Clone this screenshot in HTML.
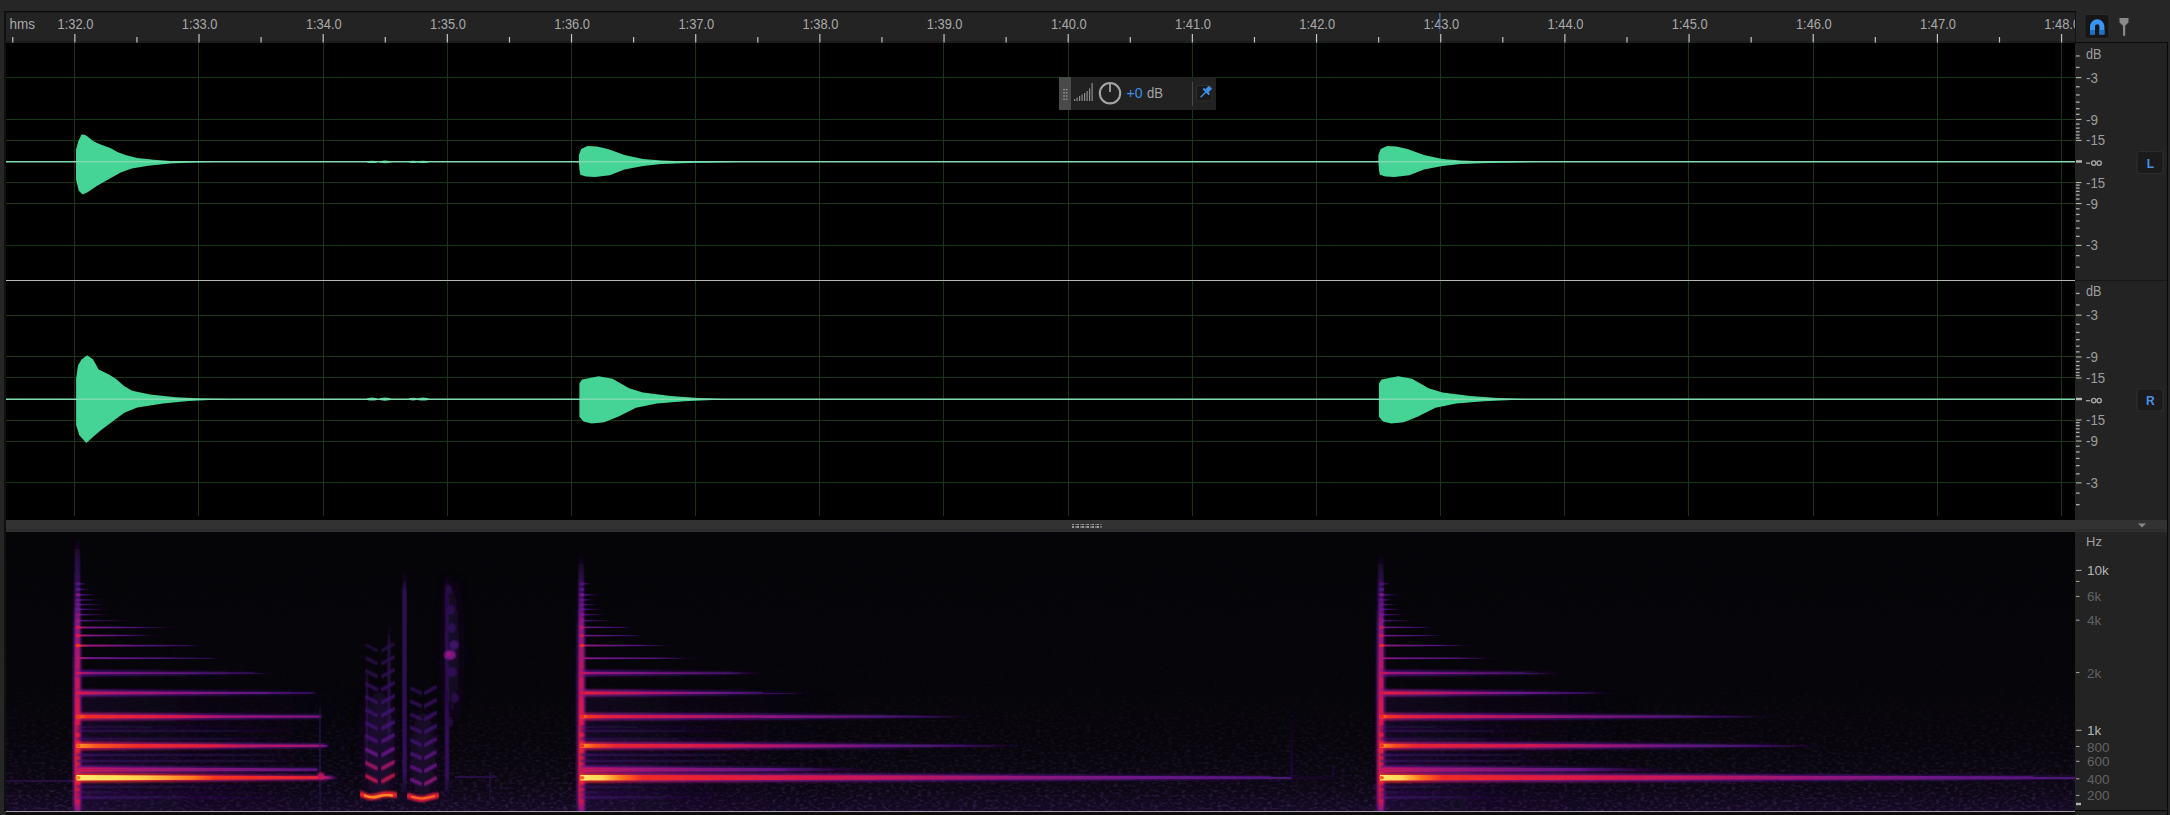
<!DOCTYPE html><html><head><meta charset="utf-8"><style>
html,body{margin:0;padding:0;background:#262626;width:2170px;height:815px;overflow:hidden}
svg{position:absolute;left:0;top:0;display:block}
text{font-family:"Liberation Sans",sans-serif}
</style></head><body>
<svg width="2170" height="815" viewBox="0 0 2170 815" shape-rendering="crispEdges">
<defs>
<filter id="blur1" x="-5%" y="-50%" width="110%" height="200%"><feGaussianBlur stdDeviation="0.8"/></filter>
<filter id="blur2" x="-5%" y="-50%" width="110%" height="200%"><feGaussianBlur stdDeviation="1.5"/></filter>
<filter id="blur3" x="-20%" y="-20%" width="140%" height="140%"><feGaussianBlur stdDeviation="2.5"/></filter>
<linearGradient id="sbg" x1="0" y1="0" x2="0" y2="1"><stop offset="0" stop-color="#050407"/><stop offset="0.55" stop-color="#060509"/><stop offset="0.8" stop-color="#08060c"/><stop offset="0.92" stop-color="#0c0714"/><stop offset="1" stop-color="#140a24"/></linearGradient>
<filter id="sb1" x="-2%" y="-200%" width="104%" height="500%"><feGaussianBlur stdDeviation="0.6"/></filter>
<filter id="sb2" x="-5%" y="-200%" width="110%" height="500%"><feGaussianBlur stdDeviation="1.2"/></filter>
<filter id="sb3" x="-50%" y="-50%" width="200%" height="200%"><feGaussianBlur stdDeviation="3"/></filter>
<filter id="noise" x="0" y="0" width="100%" height="100%"><feTurbulence type="fractalNoise" baseFrequency="0.22 0.4" numOctaves="2" seed="3"/><feColorMatrix type="matrix" values="0 0 0 0 0.16  0 0 0 0 0.06  0 0 0 0 0.3  0 0 0 1.8 -0.85"/></filter>
<linearGradient id="nmask" x1="0" y1="0" x2="0" y2="1"><stop offset="0" stop-color="#fff" stop-opacity="0.05"/><stop offset="0.6" stop-color="#fff" stop-opacity="0.15"/><stop offset="0.86" stop-color="#fff" stop-opacity="0.6"/><stop offset="1" stop-color="#fff" stop-opacity="1"/></linearGradient>
<mask id="nm"><rect x="6" y="532" width="2069" height="279" fill="url(#nmask)"/></mask>
<linearGradient id="hazeh" x1="0" y1="0" x2="1" y2="0"><stop offset="0" stop-color="#2a0f4a" stop-opacity="0.9"/><stop offset="0.3" stop-color="#1e0c38" stop-opacity="0.6"/><stop offset="1" stop-color="#140a24" stop-opacity="0"/></linearGradient>
<linearGradient id="g1" gradientUnits="userSpaceOnUse" x1="6" y1="0" x2="76" y2="0"><stop offset="0.0000" stop-color="#290d46" stop-opacity="1.00"/><stop offset="0.9143" stop-color="#2d0e4e" stop-opacity="1.00"/><stop offset="1.0000" stop-color="#3e126e" stop-opacity="1.00"/></linearGradient>
<linearGradient id="g2" gradientUnits="userSpaceOnUse" x1="0" y1="537" x2="0" y2="811"><stop offset="0.0000" stop-color="#1d0a30" stop-opacity="0.00"/><stop offset="0.0730" stop-color="#1d0a30" stop-opacity="0.00"/><stop offset="0.1934" stop-color="#1d0a30" stop-opacity="0.35"/><stop offset="0.3394" stop-color="#35105e" stop-opacity="0.70"/><stop offset="0.5219" stop-color="#58137e" stop-opacity="0.70"/><stop offset="0.6679" stop-color="#6b148a" stop-opacity="0.70"/><stop offset="0.8139" stop-color="#851480" stop-opacity="0.70"/><stop offset="0.9599" stop-color="#73148a" stop-opacity="0.70"/><stop offset="1.0000" stop-color="#3e126e" stop-opacity="0.70"/></linearGradient>
<linearGradient id="g3" gradientUnits="userSpaceOnUse" x1="0" y1="537" x2="0" y2="811"><stop offset="0.0000" stop-color="#1d0a30" stop-opacity="0.00"/><stop offset="0.0730" stop-color="#240c3e" stop-opacity="1.00"/><stop offset="0.1934" stop-color="#3a1166" stop-opacity="1.00"/><stop offset="0.3394" stop-color="#73148a" stop-opacity="1.00"/><stop offset="0.5219" stop-color="#aa146e" stop-opacity="1.00"/><stop offset="0.6679" stop-color="#c4155a" stop-opacity="1.00"/><stop offset="0.8139" stop-color="#de1646" stop-opacity="1.00"/><stop offset="0.9599" stop-color="#cd1553" stop-opacity="1.00"/><stop offset="1.0000" stop-color="#851480" stop-opacity="1.00"/></linearGradient>
<linearGradient id="g4" gradientUnits="userSpaceOnUse" x1="0" y1="585" x2="0" y2="811"><stop offset="0.0000" stop-color="#1d0a30" stop-opacity="0.00"/><stop offset="0.1549" stop-color="#851480" stop-opacity="1.00"/><stop offset="0.4204" stop-color="#c4155a" stop-opacity="1.00"/><stop offset="0.5973" stop-color="#de1646" stop-opacity="1.00"/><stop offset="0.8186" stop-color="#ec272e" stop-opacity="1.00"/><stop offset="0.9513" stop-color="#d5164d" stop-opacity="1.00"/><stop offset="1.0000" stop-color="#851480" stop-opacity="1.00"/></linearGradient>
<linearGradient id="g5" gradientUnits="userSpaceOnUse" x1="76.5" y1="0" x2="319.5" y2="0"><stop offset="0.0000" stop-color="#6b148a" stop-opacity="0.85"/><stop offset="0.2469" stop-color="#51137a" stop-opacity="0.85"/><stop offset="0.9877" stop-color="#270c43" stop-opacity="0.85"/><stop offset="1.0000" stop-color="#1d0a30" stop-opacity="0.00"/></linearGradient>
<linearGradient id="g6" gradientUnits="userSpaceOnUse" x1="76.5" y1="0" x2="319.5" y2="0"><stop offset="0.0000" stop-color="#c4155a" stop-opacity="1.00"/><stop offset="0.2469" stop-color="#a11473" stop-opacity="1.00"/><stop offset="0.9877" stop-color="#5b1380" stop-opacity="1.00"/><stop offset="1.0000" stop-color="#1d0a30" stop-opacity="0.00"/></linearGradient>
<linearGradient id="g7" gradientUnits="userSpaceOnUse" x1="76.5" y1="0" x2="319.5" y2="0"><stop offset="0.0000" stop-color="#4b1376" stop-opacity="1.00"/><stop offset="0.0988" stop-color="#35105e" stop-opacity="1.00"/><stop offset="0.7901" stop-color="#250c3f" stop-opacity="1.00"/><stop offset="1.0000" stop-color="#1d0a30" stop-opacity="0.00"/></linearGradient>
<linearGradient id="g8" gradientUnits="userSpaceOnUse" x1="76.5" y1="0" x2="319.5" y2="0"><stop offset="0.0000" stop-color="#4b1376" stop-opacity="1.00"/><stop offset="0.0988" stop-color="#35105e" stop-opacity="1.00"/><stop offset="0.7901" stop-color="#250c3f" stop-opacity="1.00"/><stop offset="1.0000" stop-color="#1d0a30" stop-opacity="0.00"/></linearGradient>
<linearGradient id="g9" gradientUnits="userSpaceOnUse" x1="76.5" y1="0" x2="319.5" y2="0"><stop offset="0.0000" stop-color="#481274" stop-opacity="1.00"/><stop offset="0.0494" stop-color="#330f5a" stop-opacity="1.00"/><stop offset="0.6584" stop-color="#230b3c" stop-opacity="1.00"/><stop offset="1.0000" stop-color="#1d0a30" stop-opacity="0.00"/></linearGradient>
<linearGradient id="g10" gradientUnits="userSpaceOnUse" x1="76.5" y1="0" x2="319.5" y2="0"><stop offset="0.0000" stop-color="#481274" stop-opacity="1.00"/><stop offset="0.0494" stop-color="#330f5a" stop-opacity="1.00"/><stop offset="0.7243" stop-color="#230b3c" stop-opacity="1.00"/><stop offset="1.0000" stop-color="#1d0a30" stop-opacity="0.00"/></linearGradient>
<linearGradient id="g11" gradientUnits="userSpaceOnUse" x1="76.5" y1="0" x2="316.5" y2="0"><stop offset="0.0000" stop-color="#3e126e" stop-opacity="1.00"/><stop offset="0.0500" stop-color="#2d0e4e" stop-opacity="1.00"/><stop offset="0.6000" stop-color="#1f0a34" stop-opacity="1.00"/><stop offset="1.0000" stop-color="#1d0a30" stop-opacity="0.00"/></linearGradient>
<linearGradient id="g12" gradientUnits="userSpaceOnUse" x1="76.5" y1="0" x2="301.5" y2="0"><stop offset="0.0000" stop-color="#441272" stop-opacity="1.00"/><stop offset="0.0533" stop-color="#310f56" stop-opacity="1.00"/><stop offset="0.5689" stop-color="#220b39" stop-opacity="1.00"/><stop offset="1.0000" stop-color="#1d0a30" stop-opacity="0.00"/></linearGradient>
<linearGradient id="g13" gradientUnits="userSpaceOnUse" x1="76.5" y1="0" x2="301.5" y2="0"><stop offset="0.0000" stop-color="#441272" stop-opacity="1.00"/><stop offset="0.0533" stop-color="#310f56" stop-opacity="1.00"/><stop offset="0.5689" stop-color="#220b39" stop-opacity="1.00"/><stop offset="1.0000" stop-color="#1d0a30" stop-opacity="0.00"/></linearGradient>
<linearGradient id="g14" gradientUnits="userSpaceOnUse" x1="76.5" y1="0" x2="316.5" y2="0"><stop offset="0.0000" stop-color="#58137e" stop-opacity="1.00"/><stop offset="0.1000" stop-color="#3e126e" stop-opacity="1.00"/><stop offset="0.6000" stop-color="#2b0d4a" stop-opacity="1.00"/><stop offset="1.0000" stop-color="#1d0a30" stop-opacity="0.00"/></linearGradient>
<linearGradient id="g15" gradientUnits="userSpaceOnUse" x1="76.5" y1="0" x2="340.0" y2="0"><stop offset="0.0000" stop-color="#f02c26" stop-opacity="0.85"/><stop offset="0.1518" stop-color="#ee2a2a" stop-opacity="0.85"/><stop offset="0.2581" stop-color="#ea2432" stop-opacity="0.85"/><stop offset="0.4364" stop-color="#d5164d" stop-opacity="0.85"/><stop offset="0.5313" stop-color="#b31467" stop-opacity="0.85"/><stop offset="0.7590" stop-color="#a11473" stop-opacity="0.85"/><stop offset="0.9241" stop-color="#981477" stop-opacity="0.85"/><stop offset="0.9545" stop-color="#4e1378" stop-opacity="0.85"/><stop offset="1.0000" stop-color="#1d0a30" stop-opacity="0.00"/></linearGradient>
<linearGradient id="g16" gradientUnits="userSpaceOnUse" x1="76.5" y1="0" x2="340.0" y2="0"><stop offset="0.0000" stop-color="#ffe871" stop-opacity="1.00"/><stop offset="0.1518" stop-color="#ffe15a" stop-opacity="1.00"/><stop offset="0.2581" stop-color="#ffc949" stop-opacity="1.00"/><stop offset="0.4364" stop-color="#fd7a1e" stop-opacity="1.00"/><stop offset="0.5313" stop-color="#f5321e" stop-opacity="1.00"/><stop offset="0.7590" stop-color="#ec272e" stop-opacity="1.00"/><stop offset="0.9241" stop-color="#e72136" stop-opacity="1.00"/><stop offset="0.9545" stop-color="#9c1475" stop-opacity="1.00"/><stop offset="1.0000" stop-color="#1d0a30" stop-opacity="0.00"/></linearGradient>
<linearGradient id="g17" gradientUnits="userSpaceOnUse" x1="76.5" y1="0" x2="330.0" y2="0"><stop offset="0.0000" stop-color="#e01942" stop-opacity="0.85"/><stop offset="0.0789" stop-color="#c4155a" stop-opacity="0.85"/><stop offset="0.2367" stop-color="#a51470" stop-opacity="0.85"/><stop offset="0.5325" stop-color="#8e147c" stop-opacity="0.85"/><stop offset="0.6706" stop-color="#641486" stop-opacity="0.85"/><stop offset="0.9606" stop-color="#51137a" stop-opacity="0.85"/><stop offset="0.9842" stop-color="#290d46" stop-opacity="0.85"/><stop offset="1.0000" stop-color="#1d0a30" stop-opacity="0.00"/></linearGradient>
<linearGradient id="g18" gradientUnits="userSpaceOnUse" x1="76.5" y1="0" x2="330.0" y2="0"><stop offset="0.0000" stop-color="#ff9827" stop-opacity="1.00"/><stop offset="0.0789" stop-color="#f9561e" stop-opacity="1.00"/><stop offset="0.2367" stop-color="#ee2a2a" stop-opacity="1.00"/><stop offset="0.5325" stop-color="#e31c3e" stop-opacity="1.00"/><stop offset="0.6706" stop-color="#bb1561" stop-opacity="1.00"/><stop offset="0.9606" stop-color="#a11473" stop-opacity="1.00"/><stop offset="0.9842" stop-color="#5e1382" stop-opacity="1.00"/><stop offset="1.0000" stop-color="#1d0a30" stop-opacity="0.00"/></linearGradient>
<linearGradient id="g19" gradientUnits="userSpaceOnUse" x1="76.5" y1="0" x2="323.0" y2="0"><stop offset="0.0000" stop-color="#cd1553" stop-opacity="0.85"/><stop offset="0.0406" stop-color="#aa146e" stop-opacity="0.85"/><stop offset="0.3854" stop-color="#851480" stop-opacity="0.85"/><stop offset="0.6085" stop-color="#51137a" stop-opacity="0.85"/><stop offset="0.9878" stop-color="#3e126e" stop-opacity="0.85"/><stop offset="1.0000" stop-color="#1d0a30" stop-opacity="0.00"/></linearGradient>
<linearGradient id="g20" gradientUnits="userSpaceOnUse" x1="76.5" y1="0" x2="323.0" y2="0"><stop offset="0.0000" stop-color="#fb681e" stop-opacity="1.00"/><stop offset="0.0406" stop-color="#f02c26" stop-opacity="1.00"/><stop offset="0.3854" stop-color="#de1646" stop-opacity="1.00"/><stop offset="0.6085" stop-color="#a11473" stop-opacity="1.00"/><stop offset="0.9878" stop-color="#851480" stop-opacity="1.00"/><stop offset="1.0000" stop-color="#1d0a30" stop-opacity="0.00"/></linearGradient>
<linearGradient id="g21" gradientUnits="userSpaceOnUse" x1="76.5" y1="0" x2="320.0" y2="0"><stop offset="0.0000" stop-color="#851480" stop-opacity="0.85"/><stop offset="0.0821" stop-color="#641486" stop-opacity="0.85"/><stop offset="0.4107" stop-color="#441272" stop-opacity="0.85"/><stop offset="0.7392" stop-color="#290d46" stop-opacity="0.85"/><stop offset="0.9589" stop-color="#1d0a30" stop-opacity="0.43"/><stop offset="1.0000" stop-color="#1d0a30" stop-opacity="0.00"/></linearGradient>
<linearGradient id="g22" gradientUnits="userSpaceOnUse" x1="76.5" y1="0" x2="320.0" y2="0"><stop offset="0.0000" stop-color="#de1646" stop-opacity="1.00"/><stop offset="0.0821" stop-color="#bb1561" stop-opacity="1.00"/><stop offset="0.4107" stop-color="#8e147c" stop-opacity="1.00"/><stop offset="0.7392" stop-color="#5e1382" stop-opacity="1.00"/><stop offset="0.9589" stop-color="#3a1166" stop-opacity="1.00"/><stop offset="1.0000" stop-color="#1d0a30" stop-opacity="0.00"/></linearGradient>
<linearGradient id="g23" gradientUnits="userSpaceOnUse" x1="76.5" y1="0" x2="276.5" y2="0"><stop offset="0.0000" stop-color="#641486" stop-opacity="0.85"/><stop offset="0.1000" stop-color="#3e126e" stop-opacity="0.85"/><stop offset="0.6000" stop-color="#240c3e" stop-opacity="0.85"/><stop offset="0.8750" stop-color="#1d0a30" stop-opacity="0.43"/><stop offset="1.0000" stop-color="#1d0a30" stop-opacity="0.00"/></linearGradient>
<linearGradient id="g24" gradientUnits="userSpaceOnUse" x1="76.5" y1="0" x2="276.5" y2="0"><stop offset="0.0000" stop-color="#bb1561" stop-opacity="1.00"/><stop offset="0.1000" stop-color="#851480" stop-opacity="1.00"/><stop offset="0.6000" stop-color="#58137e" stop-opacity="1.00"/><stop offset="0.8750" stop-color="#3a1166" stop-opacity="1.00"/><stop offset="1.0000" stop-color="#1d0a30" stop-opacity="0.00"/></linearGradient>
<linearGradient id="g25" gradientUnits="userSpaceOnUse" x1="76.5" y1="0" x2="226.5" y2="0"><stop offset="0.0000" stop-color="#b31467" stop-opacity="1.00"/><stop offset="0.1000" stop-color="#6b148a" stop-opacity="1.00"/><stop offset="0.6000" stop-color="#4b1376" stop-opacity="1.00"/><stop offset="0.8667" stop-color="#2d0e4e" stop-opacity="1.00"/><stop offset="1.0000" stop-color="#1d0a30" stop-opacity="0.00"/></linearGradient>
<linearGradient id="g26" gradientUnits="userSpaceOnUse" x1="76.5" y1="0" x2="206.5" y2="0"><stop offset="0.0000" stop-color="#f02c26" stop-opacity="1.00"/><stop offset="0.0923" stop-color="#981477" stop-opacity="1.00"/><stop offset="0.5385" stop-color="#51137a" stop-opacity="1.00"/><stop offset="0.8462" stop-color="#2d0e4e" stop-opacity="1.00"/><stop offset="1.0000" stop-color="#1d0a30" stop-opacity="0.00"/></linearGradient>
<linearGradient id="g27" gradientUnits="userSpaceOnUse" x1="76.5" y1="0" x2="166.5" y2="0"><stop offset="0.0000" stop-color="#d5164d" stop-opacity="1.00"/><stop offset="0.1333" stop-color="#851480" stop-opacity="1.00"/><stop offset="0.5556" stop-color="#4b1376" stop-opacity="1.00"/><stop offset="1.0000" stop-color="#1d0a30" stop-opacity="0.00"/></linearGradient>
<linearGradient id="g28" gradientUnits="userSpaceOnUse" x1="76.5" y1="0" x2="184.5" y2="0"><stop offset="0.0000" stop-color="#c4155a" stop-opacity="1.00"/><stop offset="0.1111" stop-color="#7c1485" stop-opacity="1.00"/><stop offset="0.5556" stop-color="#441272" stop-opacity="1.00"/><stop offset="1.0000" stop-color="#1d0a30" stop-opacity="0.00"/></linearGradient>
<linearGradient id="g29" gradientUnits="userSpaceOnUse" x1="76.5" y1="0" x2="146.5" y2="0"><stop offset="0.0000" stop-color="#641486" stop-opacity="1.00"/><stop offset="0.0857" stop-color="#4b1376" stop-opacity="1.00"/><stop offset="1.0000" stop-color="#1d0a30" stop-opacity="0.00"/></linearGradient>
<linearGradient id="g30" gradientUnits="userSpaceOnUse" x1="76.5" y1="0" x2="118.5" y2="0"><stop offset="0.0000" stop-color="#641486" stop-opacity="1.00"/><stop offset="0.1429" stop-color="#4b1376" stop-opacity="1.00"/><stop offset="1.0000" stop-color="#1d0a30" stop-opacity="0.00"/></linearGradient>
<linearGradient id="g31" gradientUnits="userSpaceOnUse" x1="76.5" y1="0" x2="114.5" y2="0"><stop offset="0.0000" stop-color="#5e1382" stop-opacity="1.00"/><stop offset="0.1579" stop-color="#441272" stop-opacity="1.00"/><stop offset="1.0000" stop-color="#1d0a30" stop-opacity="0.00"/></linearGradient>
<linearGradient id="g32" gradientUnits="userSpaceOnUse" x1="76.5" y1="0" x2="111.5" y2="0"><stop offset="0.0000" stop-color="#58137e" stop-opacity="1.00"/><stop offset="0.1714" stop-color="#3e126e" stop-opacity="1.00"/><stop offset="1.0000" stop-color="#1d0a30" stop-opacity="0.00"/></linearGradient>
<linearGradient id="g33" gradientUnits="userSpaceOnUse" x1="76.5" y1="0" x2="108.5" y2="0"><stop offset="0.0000" stop-color="#58137e" stop-opacity="1.00"/><stop offset="0.1875" stop-color="#3e126e" stop-opacity="1.00"/><stop offset="1.0000" stop-color="#1d0a30" stop-opacity="0.00"/></linearGradient>
<linearGradient id="g34" gradientUnits="userSpaceOnUse" x1="76.5" y1="0" x2="101.5" y2="0"><stop offset="0.0000" stop-color="#58137e" stop-opacity="1.00"/><stop offset="0.2400" stop-color="#3e126e" stop-opacity="1.00"/><stop offset="1.0000" stop-color="#1d0a30" stop-opacity="0.00"/></linearGradient>
<linearGradient id="g35" gradientUnits="userSpaceOnUse" x1="76.5" y1="0" x2="94.5" y2="0"><stop offset="0.0000" stop-color="#4b1376" stop-opacity="1.00"/><stop offset="0.3333" stop-color="#35105e" stop-opacity="1.00"/><stop offset="1.0000" stop-color="#1d0a30" stop-opacity="0.00"/></linearGradient>
<linearGradient id="g36" gradientUnits="userSpaceOnUse" x1="76.5" y1="0" x2="88.5" y2="0"><stop offset="0.0000" stop-color="#441272" stop-opacity="1.00"/><stop offset="0.5000" stop-color="#310f56" stop-opacity="1.00"/><stop offset="1.0000" stop-color="#1d0a30" stop-opacity="0.00"/></linearGradient>
<linearGradient id="g37" gradientUnits="userSpaceOnUse" x1="0" y1="552" x2="0" y2="811"><stop offset="0.0000" stop-color="#1d0a30" stop-opacity="0.00"/><stop offset="0.0772" stop-color="#1d0a30" stop-opacity="0.00"/><stop offset="0.1467" stop-color="#1d0a30" stop-opacity="0.35"/><stop offset="0.3012" stop-color="#35105e" stop-opacity="0.70"/><stop offset="0.4942" stop-color="#58137e" stop-opacity="0.70"/><stop offset="0.6486" stop-color="#6b148a" stop-opacity="0.70"/><stop offset="0.8031" stop-color="#851480" stop-opacity="0.70"/><stop offset="0.9575" stop-color="#73148a" stop-opacity="0.70"/><stop offset="1.0000" stop-color="#3e126e" stop-opacity="0.70"/></linearGradient>
<linearGradient id="g38" gradientUnits="userSpaceOnUse" x1="0" y1="552" x2="0" y2="811"><stop offset="0.0000" stop-color="#1d0a30" stop-opacity="0.00"/><stop offset="0.0772" stop-color="#240c3e" stop-opacity="1.00"/><stop offset="0.1467" stop-color="#3a1166" stop-opacity="1.00"/><stop offset="0.3012" stop-color="#73148a" stop-opacity="1.00"/><stop offset="0.4942" stop-color="#aa146e" stop-opacity="1.00"/><stop offset="0.6486" stop-color="#c4155a" stop-opacity="1.00"/><stop offset="0.8031" stop-color="#de1646" stop-opacity="1.00"/><stop offset="0.9575" stop-color="#cd1553" stop-opacity="1.00"/><stop offset="1.0000" stop-color="#851480" stop-opacity="1.00"/></linearGradient>
<linearGradient id="g39" gradientUnits="userSpaceOnUse" x1="0" y1="585" x2="0" y2="811"><stop offset="0.0000" stop-color="#1d0a30" stop-opacity="0.00"/><stop offset="0.1549" stop-color="#851480" stop-opacity="1.00"/><stop offset="0.4204" stop-color="#c4155a" stop-opacity="1.00"/><stop offset="0.5973" stop-color="#de1646" stop-opacity="1.00"/><stop offset="0.8186" stop-color="#ec272e" stop-opacity="1.00"/><stop offset="0.9513" stop-color="#d5164d" stop-opacity="1.00"/><stop offset="1.0000" stop-color="#851480" stop-opacity="1.00"/></linearGradient>
<linearGradient id="g40" gradientUnits="userSpaceOnUse" x1="580.3" y1="0" x2="880.3" y2="0"><stop offset="0.0000" stop-color="#6b148a" stop-opacity="0.85"/><stop offset="0.1667" stop-color="#51137a" stop-opacity="0.85"/><stop offset="0.6667" stop-color="#270c43" stop-opacity="0.85"/><stop offset="1.0000" stop-color="#1d0a30" stop-opacity="0.00"/></linearGradient>
<linearGradient id="g41" gradientUnits="userSpaceOnUse" x1="580.3" y1="0" x2="880.3" y2="0"><stop offset="0.0000" stop-color="#c4155a" stop-opacity="1.00"/><stop offset="0.1667" stop-color="#a11473" stop-opacity="1.00"/><stop offset="0.6667" stop-color="#5b1380" stop-opacity="1.00"/><stop offset="1.0000" stop-color="#1d0a30" stop-opacity="0.00"/></linearGradient>
<linearGradient id="g42" gradientUnits="userSpaceOnUse" x1="580.3" y1="0" x2="780.3" y2="0"><stop offset="0.0000" stop-color="#4b1376" stop-opacity="1.00"/><stop offset="0.1000" stop-color="#35105e" stop-opacity="1.00"/><stop offset="0.6000" stop-color="#250c3f" stop-opacity="1.00"/><stop offset="1.0000" stop-color="#1d0a30" stop-opacity="0.00"/></linearGradient>
<linearGradient id="g43" gradientUnits="userSpaceOnUse" x1="580.3" y1="0" x2="780.3" y2="0"><stop offset="0.0000" stop-color="#4b1376" stop-opacity="1.00"/><stop offset="0.1000" stop-color="#35105e" stop-opacity="1.00"/><stop offset="0.6000" stop-color="#250c3f" stop-opacity="1.00"/><stop offset="1.0000" stop-color="#1d0a30" stop-opacity="0.00"/></linearGradient>
<linearGradient id="g44" gradientUnits="userSpaceOnUse" x1="580.3" y1="0" x2="760.3" y2="0"><stop offset="0.0000" stop-color="#481274" stop-opacity="1.00"/><stop offset="0.0556" stop-color="#330f5a" stop-opacity="1.00"/><stop offset="0.5556" stop-color="#230b3c" stop-opacity="1.00"/><stop offset="1.0000" stop-color="#1d0a30" stop-opacity="0.00"/></linearGradient>
<linearGradient id="g45" gradientUnits="userSpaceOnUse" x1="580.3" y1="0" x2="770.3" y2="0"><stop offset="0.0000" stop-color="#481274" stop-opacity="1.00"/><stop offset="0.0526" stop-color="#330f5a" stop-opacity="1.00"/><stop offset="0.5789" stop-color="#230b3c" stop-opacity="1.00"/><stop offset="1.0000" stop-color="#1d0a30" stop-opacity="0.00"/></linearGradient>
<linearGradient id="g46" gradientUnits="userSpaceOnUse" x1="580.3" y1="0" x2="740.3" y2="0"><stop offset="0.0000" stop-color="#3e126e" stop-opacity="1.00"/><stop offset="0.0625" stop-color="#2d0e4e" stop-opacity="1.00"/><stop offset="0.5625" stop-color="#1f0a34" stop-opacity="1.00"/><stop offset="1.0000" stop-color="#1d0a30" stop-opacity="0.00"/></linearGradient>
<linearGradient id="g47" gradientUnits="userSpaceOnUse" x1="580.3" y1="0" x2="730.3" y2="0"><stop offset="0.0000" stop-color="#441272" stop-opacity="1.00"/><stop offset="0.0667" stop-color="#310f56" stop-opacity="1.00"/><stop offset="0.5333" stop-color="#220b39" stop-opacity="1.00"/><stop offset="1.0000" stop-color="#1d0a30" stop-opacity="0.00"/></linearGradient>
<linearGradient id="g48" gradientUnits="userSpaceOnUse" x1="580.3" y1="0" x2="730.3" y2="0"><stop offset="0.0000" stop-color="#441272" stop-opacity="1.00"/><stop offset="0.0667" stop-color="#310f56" stop-opacity="1.00"/><stop offset="0.5333" stop-color="#220b39" stop-opacity="1.00"/><stop offset="1.0000" stop-color="#1d0a30" stop-opacity="0.00"/></linearGradient>
<linearGradient id="g49" gradientUnits="userSpaceOnUse" x1="580.3" y1="0" x2="740.3" y2="0"><stop offset="0.0000" stop-color="#58137e" stop-opacity="1.00"/><stop offset="0.1250" stop-color="#3e126e" stop-opacity="1.00"/><stop offset="0.5625" stop-color="#2b0d4a" stop-opacity="1.00"/><stop offset="1.0000" stop-color="#1d0a30" stop-opacity="0.00"/></linearGradient>
<linearGradient id="g50" gradientUnits="userSpaceOnUse" x1="580.3" y1="0" x2="1292.3" y2="0"><stop offset="0.0000" stop-color="#f02c26" stop-opacity="0.85"/><stop offset="0.0309" stop-color="#ec272e" stop-opacity="0.85"/><stop offset="0.0562" stop-color="#d5164d" stop-opacity="0.85"/><stop offset="0.0871" stop-color="#aa146e" stop-opacity="0.85"/><stop offset="0.2107" stop-color="#8e147c" stop-opacity="0.85"/><stop offset="0.4213" stop-color="#6b148a" stop-opacity="0.85"/><stop offset="0.5899" stop-color="#4b1376" stop-opacity="0.85"/><stop offset="0.7865" stop-color="#310f56" stop-opacity="0.85"/><stop offset="0.9831" stop-color="#1d0a30" stop-opacity="0.85"/><stop offset="0.9986" stop-color="#1d0a30" stop-opacity="0.78"/><stop offset="1.0000" stop-color="#1d0a30" stop-opacity="0.00"/></linearGradient>
<linearGradient id="g51" gradientUnits="userSpaceOnUse" x1="580.3" y1="0" x2="1292.3" y2="0"><stop offset="0.0000" stop-color="#ffe871" stop-opacity="1.00"/><stop offset="0.0309" stop-color="#ffd551" stop-opacity="1.00"/><stop offset="0.0562" stop-color="#fd7a1e" stop-opacity="1.00"/><stop offset="0.0871" stop-color="#f02c26" stop-opacity="1.00"/><stop offset="0.2107" stop-color="#e31c3e" stop-opacity="1.00"/><stop offset="0.4213" stop-color="#c4155a" stop-opacity="1.00"/><stop offset="0.5899" stop-color="#981477" stop-opacity="1.00"/><stop offset="0.7865" stop-color="#6b148a" stop-opacity="1.00"/><stop offset="0.9831" stop-color="#4b1376" stop-opacity="1.00"/><stop offset="0.9986" stop-color="#481274" stop-opacity="1.00"/><stop offset="1.0000" stop-color="#1d0a30" stop-opacity="0.00"/></linearGradient>
<linearGradient id="g52" gradientUnits="userSpaceOnUse" x1="580.3" y1="0" x2="1030.3" y2="0"><stop offset="0.0000" stop-color="#e01942" stop-opacity="0.85"/><stop offset="0.0333" stop-color="#c0155d" stop-opacity="0.85"/><stop offset="0.0778" stop-color="#9c1475" stop-opacity="0.85"/><stop offset="0.3111" stop-color="#7c1485" stop-opacity="0.85"/><stop offset="0.4889" stop-color="#51137a" stop-opacity="0.85"/><stop offset="0.6667" stop-color="#2d0e4e" stop-opacity="0.85"/><stop offset="0.8444" stop-color="#1d0a30" stop-opacity="0.43"/><stop offset="1.0000" stop-color="#1d0a30" stop-opacity="0.00"/></linearGradient>
<linearGradient id="g53" gradientUnits="userSpaceOnUse" x1="580.3" y1="0" x2="1030.3" y2="0"><stop offset="0.0000" stop-color="#ff9827" stop-opacity="1.00"/><stop offset="0.0333" stop-color="#f84d1e" stop-opacity="1.00"/><stop offset="0.0778" stop-color="#ea2432" stop-opacity="1.00"/><stop offset="0.3111" stop-color="#d5164d" stop-opacity="1.00"/><stop offset="0.4889" stop-color="#a11473" stop-opacity="1.00"/><stop offset="0.6667" stop-color="#641486" stop-opacity="1.00"/><stop offset="0.8444" stop-color="#3a1166" stop-opacity="1.00"/><stop offset="1.0000" stop-color="#1d0a30" stop-opacity="0.00"/></linearGradient>
<linearGradient id="g54" gradientUnits="userSpaceOnUse" x1="580.3" y1="0" x2="980.3" y2="0"><stop offset="0.0000" stop-color="#de1646" stop-opacity="0.85"/><stop offset="0.0200" stop-color="#b31467" stop-opacity="0.85"/><stop offset="0.0750" stop-color="#8e147c" stop-opacity="0.85"/><stop offset="0.2125" stop-color="#73148a" stop-opacity="0.85"/><stop offset="0.4750" stop-color="#441272" stop-opacity="0.85"/><stop offset="0.7500" stop-color="#200b36" stop-opacity="0.85"/><stop offset="0.8750" stop-color="#1d0a30" stop-opacity="0.14"/><stop offset="1.0000" stop-color="#1d0a30" stop-opacity="0.00"/></linearGradient>
<linearGradient id="g55" gradientUnits="userSpaceOnUse" x1="580.3" y1="0" x2="980.3" y2="0"><stop offset="0.0000" stop-color="#ff8c1e" stop-opacity="1.00"/><stop offset="0.0200" stop-color="#f5321e" stop-opacity="1.00"/><stop offset="0.0750" stop-color="#e31c3e" stop-opacity="1.00"/><stop offset="0.2125" stop-color="#cd1553" stop-opacity="1.00"/><stop offset="0.4750" stop-color="#8e147c" stop-opacity="1.00"/><stop offset="0.7500" stop-color="#51137a" stop-opacity="1.00"/><stop offset="0.8750" stop-color="#310f56" stop-opacity="1.00"/><stop offset="1.0000" stop-color="#1d0a30" stop-opacity="0.00"/></linearGradient>
<linearGradient id="g56" gradientUnits="userSpaceOnUse" x1="580.3" y1="0" x2="815.3" y2="0"><stop offset="0.0000" stop-color="#8e147c" stop-opacity="0.85"/><stop offset="0.2553" stop-color="#641486" stop-opacity="0.85"/><stop offset="0.5957" stop-color="#310f56" stop-opacity="0.85"/><stop offset="0.8511" stop-color="#1d0a30" stop-opacity="0.43"/><stop offset="1.0000" stop-color="#1d0a30" stop-opacity="0.00"/></linearGradient>
<linearGradient id="g57" gradientUnits="userSpaceOnUse" x1="580.3" y1="0" x2="815.3" y2="0"><stop offset="0.0000" stop-color="#e31c3e" stop-opacity="1.00"/><stop offset="0.2553" stop-color="#bb1561" stop-opacity="1.00"/><stop offset="0.5957" stop-color="#6b148a" stop-opacity="1.00"/><stop offset="0.8511" stop-color="#3a1166" stop-opacity="1.00"/><stop offset="1.0000" stop-color="#1d0a30" stop-opacity="0.00"/></linearGradient>
<linearGradient id="g58" gradientUnits="userSpaceOnUse" x1="580.3" y1="0" x2="765.3" y2="0"><stop offset="0.0000" stop-color="#851480" stop-opacity="0.85"/><stop offset="0.0541" stop-color="#51137a" stop-opacity="0.85"/><stop offset="0.2703" stop-color="#3e126e" stop-opacity="0.85"/><stop offset="0.8108" stop-color="#1d0a30" stop-opacity="0.85"/><stop offset="1.0000" stop-color="#1d0a30" stop-opacity="0.00"/></linearGradient>
<linearGradient id="g59" gradientUnits="userSpaceOnUse" x1="580.3" y1="0" x2="765.3" y2="0"><stop offset="0.0000" stop-color="#de1646" stop-opacity="1.00"/><stop offset="0.0541" stop-color="#a11473" stop-opacity="1.00"/><stop offset="0.2703" stop-color="#851480" stop-opacity="1.00"/><stop offset="0.8108" stop-color="#4b1376" stop-opacity="1.00"/><stop offset="1.0000" stop-color="#1d0a30" stop-opacity="0.00"/></linearGradient>
<linearGradient id="g60" gradientUnits="userSpaceOnUse" x1="580.3" y1="0" x2="705.3" y2="0"><stop offset="0.0000" stop-color="#a11473" stop-opacity="1.00"/><stop offset="0.1200" stop-color="#73148a" stop-opacity="1.00"/><stop offset="0.6400" stop-color="#51137a" stop-opacity="1.00"/><stop offset="1.0000" stop-color="#1d0a30" stop-opacity="0.00"/></linearGradient>
<linearGradient id="g61" gradientUnits="userSpaceOnUse" x1="580.3" y1="0" x2="680.3" y2="0"><stop offset="0.0000" stop-color="#e31c3e" stop-opacity="1.00"/><stop offset="0.1000" stop-color="#851480" stop-opacity="1.00"/><stop offset="0.6000" stop-color="#4b1376" stop-opacity="1.00"/><stop offset="1.0000" stop-color="#1d0a30" stop-opacity="0.00"/></linearGradient>
<linearGradient id="g62" gradientUnits="userSpaceOnUse" x1="580.3" y1="0" x2="650.3" y2="0"><stop offset="0.0000" stop-color="#851480" stop-opacity="1.00"/><stop offset="0.1714" stop-color="#641486" stop-opacity="1.00"/><stop offset="0.6429" stop-color="#3e126e" stop-opacity="1.00"/><stop offset="1.0000" stop-color="#1d0a30" stop-opacity="0.00"/></linearGradient>
<linearGradient id="g63" gradientUnits="userSpaceOnUse" x1="580.3" y1="0" x2="636.3" y2="0"><stop offset="0.0000" stop-color="#851480" stop-opacity="1.00"/><stop offset="0.2143" stop-color="#5e1382" stop-opacity="1.00"/><stop offset="0.7143" stop-color="#3a1166" stop-opacity="1.00"/><stop offset="1.0000" stop-color="#1d0a30" stop-opacity="0.00"/></linearGradient>
<linearGradient id="g64" gradientUnits="userSpaceOnUse" x1="580.3" y1="0" x2="624.3" y2="0"><stop offset="0.0000" stop-color="#5e1382" stop-opacity="1.00"/><stop offset="0.1364" stop-color="#441272" stop-opacity="1.00"/><stop offset="1.0000" stop-color="#1d0a30" stop-opacity="0.00"/></linearGradient>
<linearGradient id="g65" gradientUnits="userSpaceOnUse" x1="580.3" y1="0" x2="612.3" y2="0"><stop offset="0.0000" stop-color="#5e1382" stop-opacity="1.00"/><stop offset="0.1875" stop-color="#441272" stop-opacity="1.00"/><stop offset="1.0000" stop-color="#1d0a30" stop-opacity="0.00"/></linearGradient>
<linearGradient id="g66" gradientUnits="userSpaceOnUse" x1="580.3" y1="0" x2="606.3" y2="0"><stop offset="0.0000" stop-color="#58137e" stop-opacity="1.00"/><stop offset="0.2308" stop-color="#3e126e" stop-opacity="1.00"/><stop offset="1.0000" stop-color="#1d0a30" stop-opacity="0.00"/></linearGradient>
<linearGradient id="g67" gradientUnits="userSpaceOnUse" x1="580.3" y1="0" x2="602.3" y2="0"><stop offset="0.0000" stop-color="#51137a" stop-opacity="1.00"/><stop offset="0.2727" stop-color="#3a1166" stop-opacity="1.00"/><stop offset="1.0000" stop-color="#1d0a30" stop-opacity="0.00"/></linearGradient>
<linearGradient id="g68" gradientUnits="userSpaceOnUse" x1="580.3" y1="0" x2="596.3" y2="0"><stop offset="0.0000" stop-color="#51137a" stop-opacity="1.00"/><stop offset="0.3750" stop-color="#3a1166" stop-opacity="1.00"/><stop offset="1.0000" stop-color="#1d0a30" stop-opacity="0.00"/></linearGradient>
<linearGradient id="g69" gradientUnits="userSpaceOnUse" x1="580.3" y1="0" x2="604.3" y2="0"><stop offset="0.0000" stop-color="#58137e" stop-opacity="1.00"/><stop offset="0.2500" stop-color="#3e126e" stop-opacity="1.00"/><stop offset="1.0000" stop-color="#1d0a30" stop-opacity="0.00"/></linearGradient>
<linearGradient id="g70" gradientUnits="userSpaceOnUse" x1="580.3" y1="0" x2="592.3" y2="0"><stop offset="0.0000" stop-color="#441272" stop-opacity="1.00"/><stop offset="0.5000" stop-color="#310f56" stop-opacity="1.00"/><stop offset="1.0000" stop-color="#1d0a30" stop-opacity="0.00"/></linearGradient>
<linearGradient id="g71" gradientUnits="userSpaceOnUse" x1="0" y1="552" x2="0" y2="811"><stop offset="0.0000" stop-color="#1d0a30" stop-opacity="0.00"/><stop offset="0.0772" stop-color="#1d0a30" stop-opacity="0.00"/><stop offset="0.1467" stop-color="#1d0a30" stop-opacity="0.35"/><stop offset="0.3012" stop-color="#35105e" stop-opacity="0.70"/><stop offset="0.4942" stop-color="#58137e" stop-opacity="0.70"/><stop offset="0.6486" stop-color="#6b148a" stop-opacity="0.70"/><stop offset="0.8031" stop-color="#851480" stop-opacity="0.70"/><stop offset="0.9575" stop-color="#73148a" stop-opacity="0.70"/><stop offset="1.0000" stop-color="#3e126e" stop-opacity="0.70"/></linearGradient>
<linearGradient id="g72" gradientUnits="userSpaceOnUse" x1="0" y1="552" x2="0" y2="811"><stop offset="0.0000" stop-color="#1d0a30" stop-opacity="0.00"/><stop offset="0.0772" stop-color="#240c3e" stop-opacity="1.00"/><stop offset="0.1467" stop-color="#3a1166" stop-opacity="1.00"/><stop offset="0.3012" stop-color="#73148a" stop-opacity="1.00"/><stop offset="0.4942" stop-color="#aa146e" stop-opacity="1.00"/><stop offset="0.6486" stop-color="#c4155a" stop-opacity="1.00"/><stop offset="0.8031" stop-color="#de1646" stop-opacity="1.00"/><stop offset="0.9575" stop-color="#cd1553" stop-opacity="1.00"/><stop offset="1.0000" stop-color="#851480" stop-opacity="1.00"/></linearGradient>
<linearGradient id="g73" gradientUnits="userSpaceOnUse" x1="0" y1="585" x2="0" y2="811"><stop offset="0.0000" stop-color="#1d0a30" stop-opacity="0.00"/><stop offset="0.1549" stop-color="#851480" stop-opacity="1.00"/><stop offset="0.4204" stop-color="#c4155a" stop-opacity="1.00"/><stop offset="0.5973" stop-color="#de1646" stop-opacity="1.00"/><stop offset="0.8186" stop-color="#ec272e" stop-opacity="1.00"/><stop offset="0.9513" stop-color="#d5164d" stop-opacity="1.00"/><stop offset="1.0000" stop-color="#851480" stop-opacity="1.00"/></linearGradient>
<linearGradient id="g74" gradientUnits="userSpaceOnUse" x1="1380.0" y1="0" x2="1680.0" y2="0"><stop offset="0.0000" stop-color="#6b148a" stop-opacity="0.85"/><stop offset="0.1667" stop-color="#51137a" stop-opacity="0.85"/><stop offset="0.6667" stop-color="#270c43" stop-opacity="0.85"/><stop offset="1.0000" stop-color="#1d0a30" stop-opacity="0.00"/></linearGradient>
<linearGradient id="g75" gradientUnits="userSpaceOnUse" x1="1380.0" y1="0" x2="1680.0" y2="0"><stop offset="0.0000" stop-color="#c4155a" stop-opacity="1.00"/><stop offset="0.1667" stop-color="#a11473" stop-opacity="1.00"/><stop offset="0.6667" stop-color="#5b1380" stop-opacity="1.00"/><stop offset="1.0000" stop-color="#1d0a30" stop-opacity="0.00"/></linearGradient>
<linearGradient id="g76" gradientUnits="userSpaceOnUse" x1="1380.0" y1="0" x2="1580.0" y2="0"><stop offset="0.0000" stop-color="#4b1376" stop-opacity="1.00"/><stop offset="0.1000" stop-color="#35105e" stop-opacity="1.00"/><stop offset="0.6000" stop-color="#250c3f" stop-opacity="1.00"/><stop offset="1.0000" stop-color="#1d0a30" stop-opacity="0.00"/></linearGradient>
<linearGradient id="g77" gradientUnits="userSpaceOnUse" x1="1380.0" y1="0" x2="1580.0" y2="0"><stop offset="0.0000" stop-color="#4b1376" stop-opacity="1.00"/><stop offset="0.1000" stop-color="#35105e" stop-opacity="1.00"/><stop offset="0.6000" stop-color="#250c3f" stop-opacity="1.00"/><stop offset="1.0000" stop-color="#1d0a30" stop-opacity="0.00"/></linearGradient>
<linearGradient id="g78" gradientUnits="userSpaceOnUse" x1="1380.0" y1="0" x2="1560.0" y2="0"><stop offset="0.0000" stop-color="#481274" stop-opacity="1.00"/><stop offset="0.0556" stop-color="#330f5a" stop-opacity="1.00"/><stop offset="0.5556" stop-color="#230b3c" stop-opacity="1.00"/><stop offset="1.0000" stop-color="#1d0a30" stop-opacity="0.00"/></linearGradient>
<linearGradient id="g79" gradientUnits="userSpaceOnUse" x1="1380.0" y1="0" x2="1570.0" y2="0"><stop offset="0.0000" stop-color="#481274" stop-opacity="1.00"/><stop offset="0.0526" stop-color="#330f5a" stop-opacity="1.00"/><stop offset="0.5789" stop-color="#230b3c" stop-opacity="1.00"/><stop offset="1.0000" stop-color="#1d0a30" stop-opacity="0.00"/></linearGradient>
<linearGradient id="g80" gradientUnits="userSpaceOnUse" x1="1380.0" y1="0" x2="1540.0" y2="0"><stop offset="0.0000" stop-color="#3e126e" stop-opacity="1.00"/><stop offset="0.0625" stop-color="#2d0e4e" stop-opacity="1.00"/><stop offset="0.5625" stop-color="#1f0a34" stop-opacity="1.00"/><stop offset="1.0000" stop-color="#1d0a30" stop-opacity="0.00"/></linearGradient>
<linearGradient id="g81" gradientUnits="userSpaceOnUse" x1="1380.0" y1="0" x2="1530.0" y2="0"><stop offset="0.0000" stop-color="#441272" stop-opacity="1.00"/><stop offset="0.0667" stop-color="#310f56" stop-opacity="1.00"/><stop offset="0.5333" stop-color="#220b39" stop-opacity="1.00"/><stop offset="1.0000" stop-color="#1d0a30" stop-opacity="0.00"/></linearGradient>
<linearGradient id="g82" gradientUnits="userSpaceOnUse" x1="1380.0" y1="0" x2="1530.0" y2="0"><stop offset="0.0000" stop-color="#441272" stop-opacity="1.00"/><stop offset="0.0667" stop-color="#310f56" stop-opacity="1.00"/><stop offset="0.5333" stop-color="#220b39" stop-opacity="1.00"/><stop offset="1.0000" stop-color="#1d0a30" stop-opacity="0.00"/></linearGradient>
<linearGradient id="g83" gradientUnits="userSpaceOnUse" x1="1380.0" y1="0" x2="1540.0" y2="0"><stop offset="0.0000" stop-color="#58137e" stop-opacity="1.00"/><stop offset="0.1250" stop-color="#3e126e" stop-opacity="1.00"/><stop offset="0.5625" stop-color="#2b0d4a" stop-opacity="1.00"/><stop offset="1.0000" stop-color="#1d0a30" stop-opacity="0.00"/></linearGradient>
<linearGradient id="g84" gradientUnits="userSpaceOnUse" x1="1380.0" y1="0" x2="2076.0" y2="0"><stop offset="0.0000" stop-color="#f02c26" stop-opacity="0.85"/><stop offset="0.0316" stop-color="#ec272e" stop-opacity="0.85"/><stop offset="0.0575" stop-color="#d5164d" stop-opacity="0.85"/><stop offset="0.0891" stop-color="#aa146e" stop-opacity="0.85"/><stop offset="0.2155" stop-color="#8e147c" stop-opacity="0.85"/><stop offset="0.4310" stop-color="#6b148a" stop-opacity="0.85"/><stop offset="0.6034" stop-color="#4b1376" stop-opacity="0.85"/><stop offset="0.8046" stop-color="#310f56" stop-opacity="0.85"/><stop offset="1.0057" stop-color="#1d0a30" stop-opacity="0.85"/><stop offset="0.9986" stop-color="#1d0a30" stop-opacity="0.78"/><stop offset="1.0000" stop-color="#1d0a30" stop-opacity="0.00"/></linearGradient>
<linearGradient id="g85" gradientUnits="userSpaceOnUse" x1="1380.0" y1="0" x2="2076.0" y2="0"><stop offset="0.0000" stop-color="#ffe871" stop-opacity="1.00"/><stop offset="0.0316" stop-color="#ffd551" stop-opacity="1.00"/><stop offset="0.0575" stop-color="#fd7a1e" stop-opacity="1.00"/><stop offset="0.0891" stop-color="#f02c26" stop-opacity="1.00"/><stop offset="0.2155" stop-color="#e31c3e" stop-opacity="1.00"/><stop offset="0.4310" stop-color="#c4155a" stop-opacity="1.00"/><stop offset="0.6034" stop-color="#981477" stop-opacity="1.00"/><stop offset="0.8046" stop-color="#6b148a" stop-opacity="1.00"/><stop offset="1.0057" stop-color="#4b1376" stop-opacity="1.00"/><stop offset="0.9986" stop-color="#481274" stop-opacity="1.00"/><stop offset="1.0000" stop-color="#1d0a30" stop-opacity="0.00"/></linearGradient>
<linearGradient id="g86" gradientUnits="userSpaceOnUse" x1="1380.0" y1="0" x2="1830.0" y2="0"><stop offset="0.0000" stop-color="#e01942" stop-opacity="0.85"/><stop offset="0.0333" stop-color="#c0155d" stop-opacity="0.85"/><stop offset="0.0778" stop-color="#9c1475" stop-opacity="0.85"/><stop offset="0.3111" stop-color="#7c1485" stop-opacity="0.85"/><stop offset="0.4889" stop-color="#51137a" stop-opacity="0.85"/><stop offset="0.6667" stop-color="#2d0e4e" stop-opacity="0.85"/><stop offset="0.8444" stop-color="#1d0a30" stop-opacity="0.43"/><stop offset="1.0000" stop-color="#1d0a30" stop-opacity="0.00"/></linearGradient>
<linearGradient id="g87" gradientUnits="userSpaceOnUse" x1="1380.0" y1="0" x2="1830.0" y2="0"><stop offset="0.0000" stop-color="#ff9827" stop-opacity="1.00"/><stop offset="0.0333" stop-color="#f84d1e" stop-opacity="1.00"/><stop offset="0.0778" stop-color="#ea2432" stop-opacity="1.00"/><stop offset="0.3111" stop-color="#d5164d" stop-opacity="1.00"/><stop offset="0.4889" stop-color="#a11473" stop-opacity="1.00"/><stop offset="0.6667" stop-color="#641486" stop-opacity="1.00"/><stop offset="0.8444" stop-color="#3a1166" stop-opacity="1.00"/><stop offset="1.0000" stop-color="#1d0a30" stop-opacity="0.00"/></linearGradient>
<linearGradient id="g88" gradientUnits="userSpaceOnUse" x1="1380.0" y1="0" x2="1780.0" y2="0"><stop offset="0.0000" stop-color="#de1646" stop-opacity="0.85"/><stop offset="0.0200" stop-color="#b31467" stop-opacity="0.85"/><stop offset="0.0750" stop-color="#8e147c" stop-opacity="0.85"/><stop offset="0.2125" stop-color="#73148a" stop-opacity="0.85"/><stop offset="0.4750" stop-color="#441272" stop-opacity="0.85"/><stop offset="0.7500" stop-color="#200b36" stop-opacity="0.85"/><stop offset="0.8750" stop-color="#1d0a30" stop-opacity="0.14"/><stop offset="1.0000" stop-color="#1d0a30" stop-opacity="0.00"/></linearGradient>
<linearGradient id="g89" gradientUnits="userSpaceOnUse" x1="1380.0" y1="0" x2="1780.0" y2="0"><stop offset="0.0000" stop-color="#ff8c1e" stop-opacity="1.00"/><stop offset="0.0200" stop-color="#f5321e" stop-opacity="1.00"/><stop offset="0.0750" stop-color="#e31c3e" stop-opacity="1.00"/><stop offset="0.2125" stop-color="#cd1553" stop-opacity="1.00"/><stop offset="0.4750" stop-color="#8e147c" stop-opacity="1.00"/><stop offset="0.7500" stop-color="#51137a" stop-opacity="1.00"/><stop offset="0.8750" stop-color="#310f56" stop-opacity="1.00"/><stop offset="1.0000" stop-color="#1d0a30" stop-opacity="0.00"/></linearGradient>
<linearGradient id="g90" gradientUnits="userSpaceOnUse" x1="1380.0" y1="0" x2="1615.0" y2="0"><stop offset="0.0000" stop-color="#8e147c" stop-opacity="0.85"/><stop offset="0.2553" stop-color="#641486" stop-opacity="0.85"/><stop offset="0.5957" stop-color="#310f56" stop-opacity="0.85"/><stop offset="0.8511" stop-color="#1d0a30" stop-opacity="0.43"/><stop offset="1.0000" stop-color="#1d0a30" stop-opacity="0.00"/></linearGradient>
<linearGradient id="g91" gradientUnits="userSpaceOnUse" x1="1380.0" y1="0" x2="1615.0" y2="0"><stop offset="0.0000" stop-color="#e31c3e" stop-opacity="1.00"/><stop offset="0.2553" stop-color="#bb1561" stop-opacity="1.00"/><stop offset="0.5957" stop-color="#6b148a" stop-opacity="1.00"/><stop offset="0.8511" stop-color="#3a1166" stop-opacity="1.00"/><stop offset="1.0000" stop-color="#1d0a30" stop-opacity="0.00"/></linearGradient>
<linearGradient id="g92" gradientUnits="userSpaceOnUse" x1="1380.0" y1="0" x2="1565.0" y2="0"><stop offset="0.0000" stop-color="#851480" stop-opacity="0.85"/><stop offset="0.0541" stop-color="#51137a" stop-opacity="0.85"/><stop offset="0.2703" stop-color="#3e126e" stop-opacity="0.85"/><stop offset="0.8108" stop-color="#1d0a30" stop-opacity="0.85"/><stop offset="1.0000" stop-color="#1d0a30" stop-opacity="0.00"/></linearGradient>
<linearGradient id="g93" gradientUnits="userSpaceOnUse" x1="1380.0" y1="0" x2="1565.0" y2="0"><stop offset="0.0000" stop-color="#de1646" stop-opacity="1.00"/><stop offset="0.0541" stop-color="#a11473" stop-opacity="1.00"/><stop offset="0.2703" stop-color="#851480" stop-opacity="1.00"/><stop offset="0.8108" stop-color="#4b1376" stop-opacity="1.00"/><stop offset="1.0000" stop-color="#1d0a30" stop-opacity="0.00"/></linearGradient>
<linearGradient id="g94" gradientUnits="userSpaceOnUse" x1="1380.0" y1="0" x2="1505.0" y2="0"><stop offset="0.0000" stop-color="#a11473" stop-opacity="1.00"/><stop offset="0.1200" stop-color="#73148a" stop-opacity="1.00"/><stop offset="0.6400" stop-color="#51137a" stop-opacity="1.00"/><stop offset="1.0000" stop-color="#1d0a30" stop-opacity="0.00"/></linearGradient>
<linearGradient id="g95" gradientUnits="userSpaceOnUse" x1="1380.0" y1="0" x2="1480.0" y2="0"><stop offset="0.0000" stop-color="#e31c3e" stop-opacity="1.00"/><stop offset="0.1000" stop-color="#851480" stop-opacity="1.00"/><stop offset="0.6000" stop-color="#4b1376" stop-opacity="1.00"/><stop offset="1.0000" stop-color="#1d0a30" stop-opacity="0.00"/></linearGradient>
<linearGradient id="g96" gradientUnits="userSpaceOnUse" x1="1380.0" y1="0" x2="1450.0" y2="0"><stop offset="0.0000" stop-color="#851480" stop-opacity="1.00"/><stop offset="0.1714" stop-color="#641486" stop-opacity="1.00"/><stop offset="0.6429" stop-color="#3e126e" stop-opacity="1.00"/><stop offset="1.0000" stop-color="#1d0a30" stop-opacity="0.00"/></linearGradient>
<linearGradient id="g97" gradientUnits="userSpaceOnUse" x1="1380.0" y1="0" x2="1436.0" y2="0"><stop offset="0.0000" stop-color="#851480" stop-opacity="1.00"/><stop offset="0.2143" stop-color="#5e1382" stop-opacity="1.00"/><stop offset="0.7143" stop-color="#3a1166" stop-opacity="1.00"/><stop offset="1.0000" stop-color="#1d0a30" stop-opacity="0.00"/></linearGradient>
<linearGradient id="g98" gradientUnits="userSpaceOnUse" x1="1380.0" y1="0" x2="1424.0" y2="0"><stop offset="0.0000" stop-color="#5e1382" stop-opacity="1.00"/><stop offset="0.1364" stop-color="#441272" stop-opacity="1.00"/><stop offset="1.0000" stop-color="#1d0a30" stop-opacity="0.00"/></linearGradient>
<linearGradient id="g99" gradientUnits="userSpaceOnUse" x1="1380.0" y1="0" x2="1412.0" y2="0"><stop offset="0.0000" stop-color="#5e1382" stop-opacity="1.00"/><stop offset="0.1875" stop-color="#441272" stop-opacity="1.00"/><stop offset="1.0000" stop-color="#1d0a30" stop-opacity="0.00"/></linearGradient>
<linearGradient id="g100" gradientUnits="userSpaceOnUse" x1="1380.0" y1="0" x2="1406.0" y2="0"><stop offset="0.0000" stop-color="#58137e" stop-opacity="1.00"/><stop offset="0.2308" stop-color="#3e126e" stop-opacity="1.00"/><stop offset="1.0000" stop-color="#1d0a30" stop-opacity="0.00"/></linearGradient>
<linearGradient id="g101" gradientUnits="userSpaceOnUse" x1="1380.0" y1="0" x2="1402.0" y2="0"><stop offset="0.0000" stop-color="#51137a" stop-opacity="1.00"/><stop offset="0.2727" stop-color="#3a1166" stop-opacity="1.00"/><stop offset="1.0000" stop-color="#1d0a30" stop-opacity="0.00"/></linearGradient>
<linearGradient id="g102" gradientUnits="userSpaceOnUse" x1="1380.0" y1="0" x2="1396.0" y2="0"><stop offset="0.0000" stop-color="#51137a" stop-opacity="1.00"/><stop offset="0.3750" stop-color="#3a1166" stop-opacity="1.00"/><stop offset="1.0000" stop-color="#1d0a30" stop-opacity="0.00"/></linearGradient>
<linearGradient id="g103" gradientUnits="userSpaceOnUse" x1="1380.0" y1="0" x2="1404.0" y2="0"><stop offset="0.0000" stop-color="#58137e" stop-opacity="1.00"/><stop offset="0.2500" stop-color="#3e126e" stop-opacity="1.00"/><stop offset="1.0000" stop-color="#1d0a30" stop-opacity="0.00"/></linearGradient>
<linearGradient id="g104" gradientUnits="userSpaceOnUse" x1="1380.0" y1="0" x2="1392.0" y2="0"><stop offset="0.0000" stop-color="#441272" stop-opacity="1.00"/><stop offset="0.5000" stop-color="#310f56" stop-opacity="1.00"/><stop offset="1.0000" stop-color="#1d0a30" stop-opacity="0.00"/></linearGradient>
<linearGradient id="g105" gradientUnits="userSpaceOnUse" x1="0" y1="700" x2="0" y2="786"><stop offset="0.0000" stop-color="#1d0a30" stop-opacity="0.00"/><stop offset="0.4651" stop-color="#1e0a32" stop-opacity="1.00"/><stop offset="0.7674" stop-color="#35105e" stop-opacity="1.00"/><stop offset="0.9302" stop-color="#35105e" stop-opacity="1.00"/><stop offset="1.0000" stop-color="#1d0a30" stop-opacity="0.00"/></linearGradient>
<linearGradient id="g106" gradientUnits="userSpaceOnUse" x1="0" y1="762" x2="0" y2="782"><stop offset="0.0000" stop-color="#1d0a30" stop-opacity="0.00"/><stop offset="0.4000" stop-color="#2d0e4e" stop-opacity="1.00"/><stop offset="1.0000" stop-color="#1d0a30" stop-opacity="0.00"/></linearGradient>
<linearGradient id="g107" gradientUnits="userSpaceOnUse" x1="1292" y1="0" x2="1336" y2="0"><stop offset="0.0000" stop-color="#220b3a" stop-opacity="1.00"/><stop offset="0.8636" stop-color="#220b3a" stop-opacity="1.00"/><stop offset="1.0000" stop-color="#1d0a30" stop-opacity="0.00"/></linearGradient>
<linearGradient id="g108" gradientUnits="userSpaceOnUse" x1="0" y1="690" x2="0" y2="805"><stop offset="0.0000" stop-color="#1d0a30" stop-opacity="0.00"/><stop offset="0.2609" stop-color="#2d0e4e" stop-opacity="1.00"/><stop offset="0.7826" stop-color="#3e126e" stop-opacity="1.00"/><stop offset="1.0000" stop-color="#240c3e" stop-opacity="1.00"/></linearGradient>
<filter id="sb6" x="-100%" y="-50%" width="300%" height="200%"><feGaussianBlur stdDeviation="6"/></filter>
<linearGradient id="g109" gradientUnits="userSpaceOnUse" x1="0" y1="568" x2="0" y2="805"><stop offset="0.0000" stop-color="#1d0a30" stop-opacity="0.00"/><stop offset="0.1055" stop-color="#381062" stop-opacity="1.00"/><stop offset="0.8734" stop-color="#381062" stop-opacity="1.00"/><stop offset="1.0000" stop-color="#1d0a30" stop-opacity="0.00"/></linearGradient>
<linearGradient id="g110" gradientUnits="userSpaceOnUse" x1="0" y1="572" x2="0" y2="805"><stop offset="0.0000" stop-color="#1d0a30" stop-opacity="0.00"/><stop offset="0.1073" stop-color="#381062" stop-opacity="1.00"/><stop offset="0.8712" stop-color="#381062" stop-opacity="1.00"/><stop offset="1.0000" stop-color="#1d0a30" stop-opacity="0.00"/></linearGradient>
<linearGradient id="g111" gradientUnits="userSpaceOnUse" x1="0" y1="620" x2="0" y2="760"><stop offset="0.0000" stop-color="#1d0a30" stop-opacity="0.00"/><stop offset="0.1786" stop-color="#2d0e4e" stop-opacity="1.00"/><stop offset="0.7857" stop-color="#2d0e4e" stop-opacity="1.00"/><stop offset="1.0000" stop-color="#1d0a30" stop-opacity="0.00"/></linearGradient>
<linearGradient id="g112" gradientUnits="userSpaceOnUse" x1="0" y1="660" x2="0" y2="780"><stop offset="0.0000" stop-color="#1d0a30" stop-opacity="0.00"/><stop offset="0.2083" stop-color="#290d46" stop-opacity="1.00"/><stop offset="0.7500" stop-color="#290d46" stop-opacity="1.00"/><stop offset="1.0000" stop-color="#1d0a30" stop-opacity="0.00"/></linearGradient>
<linearGradient id="g113" gradientUnits="userSpaceOnUse" x1="455" y1="0" x2="500" y2="0"><stop offset="0.0000" stop-color="#310f56" stop-opacity="1.00"/><stop offset="0.8889" stop-color="#2d0e4e" stop-opacity="1.00"/><stop offset="1.0000" stop-color="#1d0a30" stop-opacity="0.00"/></linearGradient>
<linearGradient id="g114" gradientUnits="userSpaceOnUse" x1="0" y1="765" x2="0" y2="800"><stop offset="0.0000" stop-color="#1d0a30" stop-opacity="0.00"/><stop offset="0.2857" stop-color="#290d46" stop-opacity="1.00"/><stop offset="1.0000" stop-color="#200b36" stop-opacity="1.00"/></linearGradient>
</defs>
<rect x="0" y="0" width="2170" height="815" fill="#262626"/>

<rect x="4" y="11" width="2071" height="1" fill="#090909"/>
<rect x="4" y="12" width="2071" height="1" fill="#1a1a1a"/>
<rect x="4" y="11" width="2" height="800" fill="#101010"/>
<rect x="6" y="13" width="2069" height="30" fill="#232323"/>
<rect x="6" y="41" width="2069" height="2" fill="#1c1c1c"/>
<rect x="12.16" y="37" width="1.2" height="5.5" fill="#c4c4c4" shape-rendering="geometricPrecision"/>
<rect x="74.25" y="34" width="1.2" height="8.5" fill="#c4c4c4" shape-rendering="geometricPrecision"/>
<rect x="136.34" y="37" width="1.2" height="5.5" fill="#c4c4c4" shape-rendering="geometricPrecision"/>
<rect x="198.42" y="34" width="1.2" height="8.5" fill="#c4c4c4" shape-rendering="geometricPrecision"/>
<rect x="260.50" y="37" width="1.2" height="5.5" fill="#c4c4c4" shape-rendering="geometricPrecision"/>
<rect x="322.59" y="34" width="1.2" height="8.5" fill="#c4c4c4" shape-rendering="geometricPrecision"/>
<rect x="384.68" y="37" width="1.2" height="5.5" fill="#c4c4c4" shape-rendering="geometricPrecision"/>
<rect x="446.76" y="34" width="1.2" height="8.5" fill="#c4c4c4" shape-rendering="geometricPrecision"/>
<rect x="508.85" y="37" width="1.2" height="5.5" fill="#c4c4c4" shape-rendering="geometricPrecision"/>
<rect x="570.93" y="34" width="1.2" height="8.5" fill="#c4c4c4" shape-rendering="geometricPrecision"/>
<rect x="633.01" y="37" width="1.2" height="5.5" fill="#c4c4c4" shape-rendering="geometricPrecision"/>
<rect x="695.10" y="34" width="1.2" height="8.5" fill="#c4c4c4" shape-rendering="geometricPrecision"/>
<rect x="757.19" y="37" width="1.2" height="5.5" fill="#c4c4c4" shape-rendering="geometricPrecision"/>
<rect x="819.27" y="34" width="1.2" height="8.5" fill="#c4c4c4" shape-rendering="geometricPrecision"/>
<rect x="881.36" y="37" width="1.2" height="5.5" fill="#c4c4c4" shape-rendering="geometricPrecision"/>
<rect x="943.44" y="34" width="1.2" height="8.5" fill="#c4c4c4" shape-rendering="geometricPrecision"/>
<rect x="1005.52" y="37" width="1.2" height="5.5" fill="#c4c4c4" shape-rendering="geometricPrecision"/>
<rect x="1067.61" y="34" width="1.2" height="8.5" fill="#c4c4c4" shape-rendering="geometricPrecision"/>
<rect x="1129.69" y="37" width="1.2" height="5.5" fill="#c4c4c4" shape-rendering="geometricPrecision"/>
<rect x="1191.78" y="34" width="1.2" height="8.5" fill="#c4c4c4" shape-rendering="geometricPrecision"/>
<rect x="1253.87" y="37" width="1.2" height="5.5" fill="#c4c4c4" shape-rendering="geometricPrecision"/>
<rect x="1315.95" y="34" width="1.2" height="8.5" fill="#c4c4c4" shape-rendering="geometricPrecision"/>
<rect x="1378.04" y="37" width="1.2" height="5.5" fill="#c4c4c4" shape-rendering="geometricPrecision"/>
<rect x="1440.12" y="34" width="1.2" height="8.5" fill="#c4c4c4" shape-rendering="geometricPrecision"/>
<rect x="1502.20" y="37" width="1.2" height="5.5" fill="#c4c4c4" shape-rendering="geometricPrecision"/>
<rect x="1564.29" y="34" width="1.2" height="8.5" fill="#c4c4c4" shape-rendering="geometricPrecision"/>
<rect x="1626.38" y="37" width="1.2" height="5.5" fill="#c4c4c4" shape-rendering="geometricPrecision"/>
<rect x="1688.46" y="34" width="1.2" height="8.5" fill="#c4c4c4" shape-rendering="geometricPrecision"/>
<rect x="1750.55" y="37" width="1.2" height="5.5" fill="#c4c4c4" shape-rendering="geometricPrecision"/>
<rect x="1812.63" y="34" width="1.2" height="8.5" fill="#c4c4c4" shape-rendering="geometricPrecision"/>
<rect x="1874.71" y="37" width="1.2" height="5.5" fill="#c4c4c4" shape-rendering="geometricPrecision"/>
<rect x="1936.80" y="34" width="1.2" height="8.5" fill="#c4c4c4" shape-rendering="geometricPrecision"/>
<rect x="1998.88" y="37" width="1.2" height="5.5" fill="#c4c4c4" shape-rendering="geometricPrecision"/>
<rect x="2060.97" y="34" width="1.2" height="8.5" fill="#c4c4c4" shape-rendering="geometricPrecision"/>
<text x="9.5" y="29" font-size="15" fill="#a9a9a9" textLength="25.5" lengthAdjust="spacingAndGlyphs">hms</text>
<svg x="6" y="12" width="2069" height="31" overflow="hidden">
<text x="51.55" y="17" font-size="15" fill="#a9a9a9" textLength="35.8" lengthAdjust="spacingAndGlyphs">1:32.0</text>
<text x="175.72" y="17" font-size="15" fill="#a9a9a9" textLength="35.8" lengthAdjust="spacingAndGlyphs">1:33.0</text>
<text x="299.89" y="17" font-size="15" fill="#a9a9a9" textLength="35.8" lengthAdjust="spacingAndGlyphs">1:34.0</text>
<text x="424.06" y="17" font-size="15" fill="#a9a9a9" textLength="35.8" lengthAdjust="spacingAndGlyphs">1:35.0</text>
<text x="548.23" y="17" font-size="15" fill="#a9a9a9" textLength="35.8" lengthAdjust="spacingAndGlyphs">1:36.0</text>
<text x="672.40" y="17" font-size="15" fill="#a9a9a9" textLength="35.8" lengthAdjust="spacingAndGlyphs">1:37.0</text>
<text x="796.57" y="17" font-size="15" fill="#a9a9a9" textLength="35.8" lengthAdjust="spacingAndGlyphs">1:38.0</text>
<text x="920.74" y="17" font-size="15" fill="#a9a9a9" textLength="35.8" lengthAdjust="spacingAndGlyphs">1:39.0</text>
<text x="1044.91" y="17" font-size="15" fill="#a9a9a9" textLength="35.8" lengthAdjust="spacingAndGlyphs">1:40.0</text>
<text x="1169.08" y="17" font-size="15" fill="#a9a9a9" textLength="35.8" lengthAdjust="spacingAndGlyphs">1:41.0</text>
<text x="1293.25" y="17" font-size="15" fill="#a9a9a9" textLength="35.8" lengthAdjust="spacingAndGlyphs">1:42.0</text>
<text x="1417.42" y="17" font-size="15" fill="#a9a9a9" textLength="35.8" lengthAdjust="spacingAndGlyphs">1:43.0</text>
<text x="1541.59" y="17" font-size="15" fill="#a9a9a9" textLength="35.8" lengthAdjust="spacingAndGlyphs">1:44.0</text>
<text x="1665.76" y="17" font-size="15" fill="#a9a9a9" textLength="35.8" lengthAdjust="spacingAndGlyphs">1:45.0</text>
<text x="1789.93" y="17" font-size="15" fill="#a9a9a9" textLength="35.8" lengthAdjust="spacingAndGlyphs">1:46.0</text>
<text x="1914.10" y="17" font-size="15" fill="#a9a9a9" textLength="35.8" lengthAdjust="spacingAndGlyphs">1:47.0</text>
<text x="2038.27" y="17" font-size="15" fill="#a9a9a9" textLength="35.8" lengthAdjust="spacingAndGlyphs">1:48.0</text>
</svg>
<rect x="2075" y="11" width="1" height="32" fill="#121212"/>
<defs><linearGradient id="phg" x1="0" y1="0" x2="0" y2="1"><stop offset="0" stop-color="#4a80b8" stop-opacity="0.75"/><stop offset="0.6" stop-color="#3a6a9a" stop-opacity="0.5"/><stop offset="1" stop-color="#3a6a9a" stop-opacity="0"/></linearGradient></defs>
<rect x="1439" y="13" width="1.6" height="24" fill="url(#phg)" shape-rendering="geometricPrecision"/>
<rect x="6" y="43" width="2069" height="477" fill="#000"/>
<rect x="6" y="77" width="2069" height="1" fill="#173517"/>
<rect x="6" y="245" width="2069" height="1" fill="#173517"/>
<rect x="6" y="119" width="2069" height="1" fill="#173517"/>
<rect x="6" y="203" width="2069" height="1" fill="#173517"/>
<rect x="6" y="140" width="2069" height="1" fill="#173517"/>
<rect x="6" y="182" width="2069" height="1" fill="#173517"/>
<rect x="6" y="315" width="2069" height="1" fill="#173517"/>
<rect x="6" y="482" width="2069" height="1" fill="#173517"/>
<rect x="6" y="356" width="2069" height="1" fill="#173517"/>
<rect x="6" y="441" width="2069" height="1" fill="#173517"/>
<rect x="6" y="377" width="2069" height="1" fill="#173517"/>
<rect x="6" y="420" width="2069" height="1" fill="#173517"/>
<rect x="74" y="43" width="1" height="473" fill="#173517"/>
<rect x="198" y="43" width="1" height="473" fill="#173517"/>
<rect x="323" y="43" width="1" height="473" fill="#173517"/>
<rect x="447" y="43" width="1" height="473" fill="#173517"/>
<rect x="571" y="43" width="1" height="473" fill="#173517"/>
<rect x="695" y="43" width="1" height="473" fill="#173517"/>
<rect x="819" y="43" width="1" height="473" fill="#173517"/>
<rect x="943" y="43" width="1" height="473" fill="#173517"/>
<rect x="1068" y="43" width="1" height="473" fill="#173517"/>
<rect x="1192" y="43" width="1" height="473" fill="#173517"/>
<rect x="1316" y="43" width="1" height="473" fill="#173517"/>
<rect x="1440" y="43" width="1" height="473" fill="#173517"/>
<rect x="1564" y="43" width="1" height="473" fill="#173517"/>
<rect x="1688" y="43" width="1" height="473" fill="#173517"/>
<rect x="1813" y="43" width="1" height="473" fill="#173517"/>
<rect x="1937" y="43" width="1" height="473" fill="#173517"/>
<rect x="2061" y="43" width="1" height="473" fill="#173517"/>
<rect x="6" y="280" width="2069" height="1" fill="#b8b8b8"/>
<g fill="#45d495" shape-rendering="geometricPrecision">
<path d="M76.0,162.0 L76.0,149.8 L78.2,141.5 L81.5,134.4 L84.0,134.5 L87.0,136.0 L93.1,141.0 L98.7,143.7 L110.8,148.2 L117.4,152.0 L126.3,155.3 L137.3,158.1 L153.9,159.8 L170.4,160.9 L192.5,161.6 L215.0,161.9 L215.0,162.1 L192.5,162.5 L170.4,163.6 L148.3,165.8 L131.8,168.6 L120.7,172.5 L110.8,178.0 L96.4,186.3 L87.6,192.3 L82.6,194.5 L78.8,190.7 L76.0,179.6 L76.0,162.0Z"/>
<path d="M578.9,162.0 L578.9,154.9 L581.2,148.9 L587.6,146.1 L596.9,146.4 L607.9,148.9 L624.5,154.9 L643.0,159.0 L661.4,160.4 L689.0,161.5 L716.7,161.9 L740.0,162.0 L740.0,162.1 L716.7,162.4 L689.0,163.0 L661.4,164.1 L643.0,166.0 L624.5,169.6 L609.8,175.2 L595.0,177.0 L586.0,176.5 L580.3,174.7 L579.4,169.6 L578.9,162.0Z"/>
<path d="M1378.4,162.0 L1378.4,154.9 L1380.7,148.9 L1387.1,146.1 L1396.4,146.4 L1407.4,148.9 L1424.0,154.9 L1442.5,159.0 L1460.9,160.4 L1488.5,161.5 L1516.2,161.9 L1539.5,162.0 L1539.5,162.1 L1516.2,162.4 L1488.5,163.0 L1460.9,164.1 L1442.5,166.0 L1424.0,169.6 L1409.3,175.2 L1394.5,177.0 L1385.5,176.5 L1379.8,174.7 L1378.9,169.6 L1378.4,162.0Z"/>
<path d="M76.1,399.0 L76.1,378.5 L78.0,365.6 L81.3,359.8 L87.1,355.3 L92.9,359.2 L98.7,369.5 L109.0,374.6 L115.4,378.5 L124.4,386.2 L132.2,390.7 L150.2,394.6 L176.0,397.2 L201.8,398.5 L230.0,399.0 L240.0,399.5 L214.6,399.8 L188.9,401.0 L163.1,403.6 L137.3,407.5 L124.4,412.7 L111.5,422.3 L101.2,430.0 L93.5,436.5 L86.4,442.9 L79.3,435.2 L76.1,424.9 L76.1,399.0Z"/>
<path d="M579.4,399.0 L579.4,383.5 L582.1,379.4 L598.7,376.3 L612.5,378.7 L629.1,388.3 L643.0,392.5 L670.6,396.0 L698.3,398.0 L726.0,398.9 L760.0,399.0 L760.0,399.6 L712.0,400.1 L684.4,401.2 L656.8,403.5 L636.0,407.7 L618.0,416.7 L604.2,422.2 L591.8,423.6 L583.5,421.5 L579.4,416.7 L579.4,399.0Z"/>
<path d="M1378.9,399.0 L1378.9,383.5 L1381.6,379.4 L1398.2,376.3 L1412.0,378.7 L1428.6,388.3 L1442.5,392.5 L1470.1,396.0 L1497.8,398.0 L1525.5,398.9 L1559.5,399.0 L1559.5,399.6 L1511.5,400.1 L1483.9,401.2 L1456.3,403.5 L1435.5,407.7 L1417.5,416.7 L1403.7,422.2 L1391.3,423.6 L1383.0,421.5 L1378.9,416.7 L1378.9,399.0Z"/>
<ellipse cx="372" cy="161.9" rx="5.0" ry="1.2"/>
<ellipse cx="372" cy="399.1" rx="5.0" ry="1.5"/>
<ellipse cx="385" cy="161.9" rx="6.0" ry="1.3"/>
<ellipse cx="385" cy="399.1" rx="6.0" ry="1.6"/>
<ellipse cx="413" cy="161.9" rx="4.0" ry="1.1"/>
<ellipse cx="413" cy="399.1" rx="4.0" ry="1.4000000000000001"/>
<ellipse cx="423" cy="161.9" rx="6.0" ry="1.2"/>
<ellipse cx="423" cy="399.1" rx="6.0" ry="1.5"/>
</g>
<rect x="6" y="161" width="2069" height="1.5" fill="#80dcae" shape-rendering="geometricPrecision"/>
<rect x="6" y="398.5" width="2069" height="1.5" fill="#80dcae" shape-rendering="geometricPrecision"/>
<g shape-rendering="geometricPrecision">
<rect x="1059" y="77" width="157" height="33" fill="#222222" opacity="0.96"/>
<rect x="1059" y="77" width="12" height="33" fill="#4a4a4a"/>
<rect x="1063.2" y="89" width="1.6" height="1.2" fill="#a0a0a0"/>
<rect x="1065.8" y="89" width="1.6" height="1.2" fill="#a0a0a0"/>
<rect x="1063.2" y="92.2" width="1.6" height="1.2" fill="#a0a0a0"/>
<rect x="1065.8" y="92.2" width="1.6" height="1.2" fill="#a0a0a0"/>
<rect x="1063.2" y="95.4" width="1.6" height="1.2" fill="#a0a0a0"/>
<rect x="1065.8" y="95.4" width="1.6" height="1.2" fill="#a0a0a0"/>
<rect x="1063.2" y="98.6" width="1.6" height="1.2" fill="#a0a0a0"/>
<rect x="1065.8" y="98.6" width="1.6" height="1.2" fill="#a0a0a0"/>
<rect x="1074" y="99" width="1.2" height="2" fill="#8c8c8c"/>
<rect x="1076.5" y="97.5" width="1.2" height="3.5" fill="#8c8c8c"/>
<rect x="1079" y="96" width="1.2" height="5" fill="#8c8c8c"/>
<rect x="1081.5" y="94.5" width="1.2" height="6.5" fill="#8c8c8c"/>
<rect x="1084" y="93" width="1.2" height="8" fill="#8c8c8c"/>
<rect x="1086.5" y="91" width="1.2" height="10" fill="#8c8c8c"/>
<rect x="1089" y="88.5" width="1.2" height="12.5" fill="#8c8c8c"/>
<rect x="1091.5" y="83" width="1.2" height="18" fill="#8c8c8c"/>
<circle cx="1110" cy="93.2" r="10.2" fill="none" stroke="#a4a4a4" stroke-width="2.1"/>
<rect x="1109.1" y="83" width="1.8" height="9" fill="#a4a4a4"/>
<text x="1126.5" y="98" font-size="14.5" fill="#3f8fe6" textLength="16" lengthAdjust="spacingAndGlyphs">+0</text>
<text x="1147" y="98" font-size="14.5" fill="#a4a4a4" textLength="16" lengthAdjust="spacingAndGlyphs">dB</text>
<rect x="1192" y="82" width="1" height="24" fill="#4a4a4a"/>
<rect x="1196.5" y="85.5" width="15.5" height="15.5" rx="1.5" fill="#1a1a1a" stroke="#2f2f2f" stroke-width="1"/>
<g transform="translate(1205.2,92.6) rotate(45)" fill="#3f8fe6">
<rect x="-2.2" y="-7.5" width="4.4" height="5.5" rx="0.8"/>
<rect x="-4.2" y="-2.6" width="8.4" height="2"/>
<rect x="-0.7" y="-1" width="1.4" height="7.5"/>
</g>
</g>
<rect x="2075" y="42" width="93" height="1" fill="#0a0a0a"/>
<rect x="2075" y="43" width="92" height="477" fill="#232323"/>
<rect x="2167" y="42" width="1" height="773" fill="#070707"/>
<rect x="2075" y="280" width="92" height="1" fill="#161616"/>
<text x="2086" y="58.5" font-size="14" fill="#9d9d9d" textLength="15.5" lengthAdjust="spacingAndGlyphs">dB</text>
<rect x="2076" y="55.3" width="3.6" height="1.3" fill="#acacac" shape-rendering="geometricPrecision"/>
<rect x="2076" y="266.5" width="3.6" height="1.3" fill="#acacac" shape-rendering="geometricPrecision"/>
<rect x="2076" y="66.8" width="3.6" height="1.3" fill="#acacac" shape-rendering="geometricPrecision"/>
<rect x="2076" y="255.0" width="3.6" height="1.3" fill="#acacac" shape-rendering="geometricPrecision"/>
<rect x="2076" y="77.1" width="5.5" height="1.1" fill="#b4b4b4" shape-rendering="geometricPrecision"/>
<rect x="2076" y="244.8" width="5.5" height="1.1" fill="#b4b4b4" shape-rendering="geometricPrecision"/>
<rect x="2076" y="86.1" width="3.6" height="1.3" fill="#acacac" shape-rendering="geometricPrecision"/>
<rect x="2076" y="235.7" width="3.6" height="1.3" fill="#acacac" shape-rendering="geometricPrecision"/>
<rect x="2076" y="94.3" width="3.6" height="1.3" fill="#acacac" shape-rendering="geometricPrecision"/>
<rect x="2076" y="227.5" width="3.6" height="1.3" fill="#acacac" shape-rendering="geometricPrecision"/>
<rect x="2076" y="101.5" width="3.6" height="1.3" fill="#acacac" shape-rendering="geometricPrecision"/>
<rect x="2076" y="220.3" width="3.6" height="1.3" fill="#acacac" shape-rendering="geometricPrecision"/>
<rect x="2076" y="108.0" width="3.6" height="1.3" fill="#acacac" shape-rendering="geometricPrecision"/>
<rect x="2076" y="213.8" width="3.6" height="1.3" fill="#acacac" shape-rendering="geometricPrecision"/>
<rect x="2076" y="113.7" width="3.6" height="1.3" fill="#acacac" shape-rendering="geometricPrecision"/>
<rect x="2076" y="208.1" width="3.6" height="1.3" fill="#acacac" shape-rendering="geometricPrecision"/>
<rect x="2076" y="118.9" width="5.5" height="1.1" fill="#b4b4b4" shape-rendering="geometricPrecision"/>
<rect x="2076" y="203.0" width="5.5" height="1.1" fill="#b4b4b4" shape-rendering="geometricPrecision"/>
<rect x="2076" y="123.4" width="3.6" height="1.3" fill="#acacac" shape-rendering="geometricPrecision"/>
<rect x="2076" y="198.4" width="3.6" height="1.3" fill="#acacac" shape-rendering="geometricPrecision"/>
<rect x="2076" y="127.5" width="3.6" height="1.3" fill="#acacac" shape-rendering="geometricPrecision"/>
<rect x="2076" y="194.3" width="3.6" height="1.3" fill="#acacac" shape-rendering="geometricPrecision"/>
<rect x="2076" y="131.1" width="3.6" height="1.3" fill="#acacac" shape-rendering="geometricPrecision"/>
<rect x="2076" y="190.7" width="3.6" height="1.3" fill="#acacac" shape-rendering="geometricPrecision"/>
<rect x="2076" y="134.4" width="3.6" height="1.3" fill="#acacac" shape-rendering="geometricPrecision"/>
<rect x="2076" y="187.4" width="3.6" height="1.3" fill="#acacac" shape-rendering="geometricPrecision"/>
<rect x="2076" y="137.3" width="3.6" height="1.3" fill="#acacac" shape-rendering="geometricPrecision"/>
<rect x="2076" y="184.5" width="3.6" height="1.3" fill="#acacac" shape-rendering="geometricPrecision"/>
<rect x="2076" y="139.9" width="5.5" height="1.1" fill="#b4b4b4" shape-rendering="geometricPrecision"/>
<rect x="2076" y="182.0" width="5.5" height="1.1" fill="#b4b4b4" shape-rendering="geometricPrecision"/>
<text x="2086" y="82.6" font-size="14" fill="#9d9d9d" textLength="12" lengthAdjust="spacingAndGlyphs">-3</text>
<text x="2086" y="250.4" font-size="14" fill="#9d9d9d" textLength="12" lengthAdjust="spacingAndGlyphs">-3</text>
<text x="2086" y="124.5" font-size="14" fill="#9d9d9d" textLength="12" lengthAdjust="spacingAndGlyphs">-9</text>
<text x="2086" y="208.5" font-size="14" fill="#9d9d9d" textLength="12" lengthAdjust="spacingAndGlyphs">-9</text>
<text x="2086" y="145.4" font-size="14" fill="#9d9d9d" textLength="19" lengthAdjust="spacingAndGlyphs">-15</text>
<text x="2086" y="187.6" font-size="14" fill="#9d9d9d" textLength="19" lengthAdjust="spacingAndGlyphs">-15</text>
<rect x="2076" y="160.3" width="6" height="2.4" fill="#b8b8b8" shape-rendering="geometricPrecision"/>
<g shape-rendering="geometricPrecision"><rect x="2086" y="162.5" width="4.2" height="1.3" fill="#a2a2a2"/><circle cx="2093.8" cy="163.1" r="2.2" fill="none" stroke="#a2a2a2" stroke-width="1.4"/><circle cx="2099.2" cy="163.1" r="2.2" fill="none" stroke="#a2a2a2" stroke-width="1.4"/></g>
<rect x="2137" y="151.5" width="26" height="22" rx="2" fill="#1b1b1b" stroke="#2d2d2d" stroke-width="1.2" shape-rendering="geometricPrecision"/>
<text x="2150.3" y="167.5" font-size="12" font-weight="bold" fill="#4a90e2" text-anchor="middle">L</text>
<text x="2086" y="296.0" font-size="14" fill="#9d9d9d" textLength="15.5" lengthAdjust="spacingAndGlyphs">dB</text>
<rect x="2076" y="292.8" width="3.6" height="1.3" fill="#acacac" shape-rendering="geometricPrecision"/>
<rect x="2076" y="504.0" width="3.6" height="1.3" fill="#acacac" shape-rendering="geometricPrecision"/>
<rect x="2076" y="304.3" width="3.6" height="1.3" fill="#acacac" shape-rendering="geometricPrecision"/>
<rect x="2076" y="492.5" width="3.6" height="1.3" fill="#acacac" shape-rendering="geometricPrecision"/>
<rect x="2076" y="314.6" width="5.5" height="1.1" fill="#b4b4b4" shape-rendering="geometricPrecision"/>
<rect x="2076" y="482.3" width="5.5" height="1.1" fill="#b4b4b4" shape-rendering="geometricPrecision"/>
<rect x="2076" y="323.6" width="3.6" height="1.3" fill="#acacac" shape-rendering="geometricPrecision"/>
<rect x="2076" y="473.2" width="3.6" height="1.3" fill="#acacac" shape-rendering="geometricPrecision"/>
<rect x="2076" y="331.8" width="3.6" height="1.3" fill="#acacac" shape-rendering="geometricPrecision"/>
<rect x="2076" y="465.0" width="3.6" height="1.3" fill="#acacac" shape-rendering="geometricPrecision"/>
<rect x="2076" y="339.0" width="3.6" height="1.3" fill="#acacac" shape-rendering="geometricPrecision"/>
<rect x="2076" y="457.8" width="3.6" height="1.3" fill="#acacac" shape-rendering="geometricPrecision"/>
<rect x="2076" y="345.5" width="3.6" height="1.3" fill="#acacac" shape-rendering="geometricPrecision"/>
<rect x="2076" y="451.3" width="3.6" height="1.3" fill="#acacac" shape-rendering="geometricPrecision"/>
<rect x="2076" y="351.2" width="3.6" height="1.3" fill="#acacac" shape-rendering="geometricPrecision"/>
<rect x="2076" y="445.6" width="3.6" height="1.3" fill="#acacac" shape-rendering="geometricPrecision"/>
<rect x="2076" y="356.4" width="5.5" height="1.1" fill="#b4b4b4" shape-rendering="geometricPrecision"/>
<rect x="2076" y="440.5" width="5.5" height="1.1" fill="#b4b4b4" shape-rendering="geometricPrecision"/>
<rect x="2076" y="360.9" width="3.6" height="1.3" fill="#acacac" shape-rendering="geometricPrecision"/>
<rect x="2076" y="435.9" width="3.6" height="1.3" fill="#acacac" shape-rendering="geometricPrecision"/>
<rect x="2076" y="365.0" width="3.6" height="1.3" fill="#acacac" shape-rendering="geometricPrecision"/>
<rect x="2076" y="431.8" width="3.6" height="1.3" fill="#acacac" shape-rendering="geometricPrecision"/>
<rect x="2076" y="368.6" width="3.6" height="1.3" fill="#acacac" shape-rendering="geometricPrecision"/>
<rect x="2076" y="428.2" width="3.6" height="1.3" fill="#acacac" shape-rendering="geometricPrecision"/>
<rect x="2076" y="371.9" width="3.6" height="1.3" fill="#acacac" shape-rendering="geometricPrecision"/>
<rect x="2076" y="424.9" width="3.6" height="1.3" fill="#acacac" shape-rendering="geometricPrecision"/>
<rect x="2076" y="374.8" width="3.6" height="1.3" fill="#acacac" shape-rendering="geometricPrecision"/>
<rect x="2076" y="422.0" width="3.6" height="1.3" fill="#acacac" shape-rendering="geometricPrecision"/>
<rect x="2076" y="377.4" width="5.5" height="1.1" fill="#b4b4b4" shape-rendering="geometricPrecision"/>
<rect x="2076" y="419.5" width="5.5" height="1.1" fill="#b4b4b4" shape-rendering="geometricPrecision"/>
<text x="2086" y="320.1" font-size="14" fill="#9d9d9d" textLength="12" lengthAdjust="spacingAndGlyphs">-3</text>
<text x="2086" y="487.9" font-size="14" fill="#9d9d9d" textLength="12" lengthAdjust="spacingAndGlyphs">-3</text>
<text x="2086" y="362.0" font-size="14" fill="#9d9d9d" textLength="12" lengthAdjust="spacingAndGlyphs">-9</text>
<text x="2086" y="446.0" font-size="14" fill="#9d9d9d" textLength="12" lengthAdjust="spacingAndGlyphs">-9</text>
<text x="2086" y="382.9" font-size="14" fill="#9d9d9d" textLength="19" lengthAdjust="spacingAndGlyphs">-15</text>
<text x="2086" y="425.1" font-size="14" fill="#9d9d9d" textLength="19" lengthAdjust="spacingAndGlyphs">-15</text>
<rect x="2076" y="397.8" width="6" height="2.4" fill="#b8b8b8" shape-rendering="geometricPrecision"/>
<g shape-rendering="geometricPrecision"><rect x="2086" y="400.0" width="4.2" height="1.3" fill="#a2a2a2"/><circle cx="2093.8" cy="400.6" r="2.2" fill="none" stroke="#a2a2a2" stroke-width="1.4"/><circle cx="2099.2" cy="400.6" r="2.2" fill="none" stroke="#a2a2a2" stroke-width="1.4"/></g>
<rect x="2137" y="389.0" width="26" height="22" rx="2" fill="#1b1b1b" stroke="#2d2d2d" stroke-width="1.2" shape-rendering="geometricPrecision"/>
<text x="2150.3" y="405.0" font-size="12" font-weight="bold" fill="#4a90e2" text-anchor="middle">R</text>
<g shape-rendering="geometricPrecision">
<rect x="2085" y="14.5" width="24" height="24" rx="2" fill="#161616" stroke="#2c2c2c" stroke-width="1"/>
<path d="M2090,34.5 L2090,26.5 A7.2,7.2 0 0 1 2104.4,26.5 L2104.4,34.5 L2099.4,34.5 L2099.4,26.5 A2.2,2.2 0 0 0 2095,26.5 L2095,34.5Z" fill="#3896f2"/>
<rect x="2090" y="30" width="5" height="4.5" fill="#1f6fc8"/><rect x="2099.4" y="30" width="5" height="4.5" fill="#1f6fc8"/>
<path d="M2119.5,18 L2128.5,18 L2128.5,22.5 L2125.3,25.5 L2122.7,25.5 L2119.5,22.5Z" fill="#8a8a8a"/>
<rect x="2123" y="23" width="2.2" height="13" rx="1" fill="#8a8a8a"/>
</g>
<rect x="6" y="520" width="2161" height="12" fill="#323232"/>
<rect x="6" y="529" width="2161" height="2" fill="#2c2c2c"/>
<rect x="1072" y="523.5" width="2" height="1.5" fill="#9a9a9a"/><rect x="1072" y="526" width="2" height="1.5" fill="#9a9a9a"/>
<rect x="1074.5" y="523.5" width="2" height="1.5" fill="#6a6a6a"/><rect x="1074.5" y="526" width="2" height="1.5" fill="#6a6a6a"/>
<rect x="1077" y="523.5" width="2" height="1.5" fill="#9a9a9a"/><rect x="1077" y="526" width="2" height="1.5" fill="#9a9a9a"/>
<rect x="1079.5" y="523.5" width="2" height="1.5" fill="#6a6a6a"/><rect x="1079.5" y="526" width="2" height="1.5" fill="#6a6a6a"/>
<rect x="1082" y="523.5" width="2" height="1.5" fill="#9a9a9a"/><rect x="1082" y="526" width="2" height="1.5" fill="#9a9a9a"/>
<rect x="1084.5" y="523.5" width="2" height="1.5" fill="#6a6a6a"/><rect x="1084.5" y="526" width="2" height="1.5" fill="#6a6a6a"/>
<rect x="1087" y="523.5" width="2" height="1.5" fill="#9a9a9a"/><rect x="1087" y="526" width="2" height="1.5" fill="#9a9a9a"/>
<rect x="1089.5" y="523.5" width="2" height="1.5" fill="#6a6a6a"/><rect x="1089.5" y="526" width="2" height="1.5" fill="#6a6a6a"/>
<rect x="1092" y="523.5" width="2" height="1.5" fill="#9a9a9a"/><rect x="1092" y="526" width="2" height="1.5" fill="#9a9a9a"/>
<rect x="1094.5" y="523.5" width="2" height="1.5" fill="#6a6a6a"/><rect x="1094.5" y="526" width="2" height="1.5" fill="#6a6a6a"/>
<rect x="1097" y="523.5" width="2" height="1.5" fill="#9a9a9a"/><rect x="1097" y="526" width="2" height="1.5" fill="#9a9a9a"/>
<rect x="1099.5" y="523.5" width="2" height="1.5" fill="#6a6a6a"/><rect x="1099.5" y="526" width="2" height="1.5" fill="#6a6a6a"/>
<path d="M2138,523.5 L2146,523.5 L2142,527.5Z" fill="#8a8a8a" shape-rendering="geometricPrecision"/>
<rect x="6" y="532" width="2069" height="279" fill="url(#sbg)"/>
<rect x="6" y="532" width="2069" height="279" filter="url(#noise)" mask="url(#nm)" opacity="0.5"/>
<svg x="6" y="532" width="2069" height="279" viewBox="6 532 2069 279" overflow="hidden">
<g shape-rendering="geometricPrecision">
<path d="M6,780.20 L76,780.20 L76,781.80 L6,781.80Z" fill="url(#g1)" filter="url(#sb1)"/>
<rect x="76.5" y="690" width="300" height="121" fill="url(#hazeh)" filter="url(#sb2)" opacity="0.35"/>
<rect x="72.55" y="537" width="9.5" height="274" fill="url(#g2)" filter="url(#sb2)"/>
<rect x="74.55" y="537" width="5.5" height="274" fill="url(#g3)" filter="url(#sb2)"/>
<rect x="75.50" y="585" width="4.0" height="226" fill="url(#g4)" filter="url(#sb1)"/>
<path d="M76.5,764.95 L319.5,767.27 L319.5,771.93 L76.5,774.25Z" fill="url(#g5)" filter="url(#sb2)"/>
<path d="M76.5,767.20 L319.5,768.40 L319.5,770.80 L76.5,772.00Z" fill="url(#g6)" filter="url(#sb1)"/>
<path d="M76.5,759.80 L319.5,760.40 L319.5,761.60 L76.5,762.20Z" fill="url(#g7)" filter="url(#sb2)"/>
<path d="M76.5,753.80 L319.5,754.40 L319.5,755.60 L76.5,756.20Z" fill="url(#g8)" filter="url(#sb2)"/>
<path d="M76.5,737.70 L319.5,738.25 L319.5,739.35 L76.5,739.90Z" fill="url(#g9)" filter="url(#sb2)"/>
<path d="M76.5,729.70 L319.5,730.25 L319.5,731.35 L76.5,731.90Z" fill="url(#g10)" filter="url(#sb2)"/>
<path d="M76.5,725.90 L316.5,726.35 L316.5,727.25 L76.5,727.70Z" fill="url(#g11)" filter="url(#sb2)"/>
<path d="M76.5,785.80 L301.5,786.30 L301.5,787.30 L76.5,787.80Z" fill="url(#g12)" filter="url(#sb2)"/>
<path d="M76.5,791.40 L301.5,791.90 L301.5,792.90 L76.5,793.40Z" fill="url(#g13)" filter="url(#sb2)"/>
<path d="M76.5,796.20 L316.5,796.80 L316.5,798.00 L76.5,798.60Z" fill="url(#g14)" filter="url(#sb2)"/>
<path d="M76.5,772.75 L340.0,775.23 L340.0,780.18 L76.5,782.65Z" fill="url(#g15)" filter="url(#sb2)"/>
<path d="M76.5,775.00 L340.0,776.35 L340.0,779.05 L76.5,780.40Z" fill="url(#g16)" filter="url(#sb1)"/>
<path d="M76.5,741.45 L330.0,743.62 L330.0,747.97 L76.5,750.15Z" fill="url(#g17)" filter="url(#sb2)"/>
<path d="M76.5,743.70 L330.0,744.75 L330.0,746.85 L76.5,747.90Z" fill="url(#g18)" filter="url(#sb1)"/>
<path d="M76.5,712.55 L323.0,714.58 L323.0,718.62 L76.5,720.65Z" fill="url(#g19)" filter="url(#sb2)"/>
<path d="M76.5,714.80 L323.0,715.70 L323.0,717.50 L76.5,718.40Z" fill="url(#g20)" filter="url(#sb1)"/>
<path d="M76.5,689.25 L320.0,691.12 L320.0,694.88 L76.5,696.75Z" fill="url(#g21)" filter="url(#sb2)"/>
<path d="M76.5,691.50 L320.0,692.25 L320.0,693.75 L76.5,694.50Z" fill="url(#g22)" filter="url(#sb1)"/>
<path d="M76.5,669.65 L276.5,671.38 L276.5,674.83 L76.5,676.55Z" fill="url(#g23)" filter="url(#sb2)"/>
<path d="M76.5,671.90 L276.5,672.50 L276.5,673.70 L76.5,674.30Z" fill="url(#g24)" filter="url(#sb1)"/>
<path d="M76.5,657.10 L226.5,657.65 L226.5,658.75 L76.5,659.30Z" fill="url(#g25)" filter="url(#sb1)"/>
<path d="M76.5,644.50 L206.5,645.05 L206.5,646.15 L76.5,646.70Z" fill="url(#g26)" filter="url(#sb1)"/>
<path d="M76.5,634.60 L166.5,635.10 L166.5,636.10 L76.5,636.60Z" fill="url(#g27)" filter="url(#sb1)"/>
<path d="M76.5,626.40 L184.5,626.90 L184.5,627.90 L76.5,628.40Z" fill="url(#g28)" filter="url(#sb1)"/>
<path d="M76.5,619.70 L146.5,620.15 L146.5,621.05 L76.5,621.50Z" fill="url(#g29)" filter="url(#sb1)"/>
<path d="M76.5,613.70 L118.5,614.15 L118.5,615.05 L76.5,615.50Z" fill="url(#g30)" filter="url(#sb1)"/>
<path d="M76.5,608.50 L114.5,608.95 L114.5,609.85 L76.5,610.30Z" fill="url(#g31)" filter="url(#sb1)"/>
<path d="M76.5,603.70 L111.5,604.15 L111.5,605.05 L76.5,605.50Z" fill="url(#g32)" filter="url(#sb1)"/>
<path d="M76.5,599.00 L108.5,599.45 L108.5,600.35 L76.5,600.80Z" fill="url(#g33)" filter="url(#sb1)"/>
<path d="M76.5,593.90 L101.5,594.35 L101.5,595.25 L76.5,595.70Z" fill="url(#g34)" filter="url(#sb1)"/>
<path d="M76.5,588.50 L94.5,588.95 L94.5,589.85 L76.5,590.30Z" fill="url(#g35)" filter="url(#sb1)"/>
<path d="M76.5,582.90 L88.5,583.35 L88.5,584.25 L76.5,584.70Z" fill="url(#g36)" filter="url(#sb1)"/>
<ellipse cx="78.0" cy="777.7" rx="2.6" ry="1.8" fill="#ff8c1e" filter="url(#sb1)"/>
<ellipse cx="78.0" cy="745.8" rx="2.6" ry="1.8" fill="#f9561e" filter="url(#sb1)"/>
<ellipse cx="78.0" cy="716.6" rx="2.6" ry="1.8" fill="#f5321e" filter="url(#sb1)"/>
<ellipse cx="78.0" cy="693.0" rx="2.6" ry="1.8" fill="#de1646" filter="url(#sb1)"/>
<ellipse cx="78.0" cy="673.1" rx="2.6" ry="1.8" fill="#cd1553" filter="url(#sb1)"/>
<ellipse cx="78.0" cy="658.2" rx="2.6" ry="1.8" fill="#b31467" filter="url(#sb1)"/>
<ellipse cx="78.0" cy="645.6" rx="2.6" ry="1.8" fill="#f5321e" filter="url(#sb1)"/>
<ellipse cx="78.0" cy="635.6" rx="2.6" ry="1.8" fill="#de1646" filter="url(#sb1)"/>
<ellipse cx="78.0" cy="627.4" rx="2.6" ry="1.8" fill="#cd1553" filter="url(#sb1)"/>
<ellipse cx="78.0" cy="620.6" rx="2.6" ry="1.8" fill="#981477" filter="url(#sb1)"/>
<ellipse cx="78.0" cy="614.6" rx="2.6" ry="1.8" fill="#851480" filter="url(#sb1)"/>
<ellipse cx="78.0" cy="609.4" rx="2.6" ry="1.8" fill="#6b148a" filter="url(#sb1)"/>
<ellipse cx="78.0" cy="604.6" rx="2.6" ry="1.8" fill="#6b148a" filter="url(#sb1)"/>
<ellipse cx="78.0" cy="599.9" rx="2.6" ry="1.8" fill="#641486" filter="url(#sb1)"/>
<ellipse cx="78.0" cy="594.8" rx="2.6" ry="1.8" fill="#851480" filter="url(#sb1)"/>
<ellipse cx="78.0" cy="589.4" rx="2.6" ry="1.8" fill="#58137e" filter="url(#sb1)"/>
<ellipse cx="78.0" cy="583.8" rx="2.6" ry="1.8" fill="#51137a" filter="url(#sb1)"/>
<rect x="580.3" y="690" width="260" height="121" fill="url(#hazeh)" filter="url(#sb2)" opacity="0.35"/>
<rect x="576.35" y="552" width="9.5" height="259" fill="url(#g37)" filter="url(#sb2)"/>
<rect x="578.35" y="552" width="5.5" height="259" fill="url(#g38)" filter="url(#sb2)"/>
<rect x="579.30" y="585" width="4.0" height="226" fill="url(#g39)" filter="url(#sb1)"/>
<path d="M580.3,764.95 L880.3,767.27 L880.3,771.93 L580.3,774.25Z" fill="url(#g40)" filter="url(#sb2)"/>
<path d="M580.3,767.20 L880.3,768.40 L880.3,770.80 L580.3,772.00Z" fill="url(#g41)" filter="url(#sb1)"/>
<path d="M580.3,759.80 L780.3,760.40 L780.3,761.60 L580.3,762.20Z" fill="url(#g42)" filter="url(#sb2)"/>
<path d="M580.3,753.80 L780.3,754.40 L780.3,755.60 L580.3,756.20Z" fill="url(#g43)" filter="url(#sb2)"/>
<path d="M580.3,737.70 L760.3,738.25 L760.3,739.35 L580.3,739.90Z" fill="url(#g44)" filter="url(#sb2)"/>
<path d="M580.3,729.70 L770.3,730.25 L770.3,731.35 L580.3,731.90Z" fill="url(#g45)" filter="url(#sb2)"/>
<path d="M580.3,725.90 L740.3,726.35 L740.3,727.25 L580.3,727.70Z" fill="url(#g46)" filter="url(#sb2)"/>
<path d="M580.3,785.80 L730.3,786.30 L730.3,787.30 L580.3,787.80Z" fill="url(#g47)" filter="url(#sb2)"/>
<path d="M580.3,791.40 L730.3,791.90 L730.3,792.90 L580.3,793.40Z" fill="url(#g48)" filter="url(#sb2)"/>
<path d="M580.3,796.20 L740.3,796.80 L740.3,798.00 L580.3,798.60Z" fill="url(#g49)" filter="url(#sb2)"/>
<path d="M580.3,772.75 L1292.3,775.23 L1292.3,780.18 L580.3,782.65Z" fill="url(#g50)" filter="url(#sb2)"/>
<path d="M580.3,775.00 L1292.3,776.35 L1292.3,779.05 L580.3,780.40Z" fill="url(#g51)" filter="url(#sb1)"/>
<path d="M580.3,741.55 L1030.3,743.67 L1030.3,747.92 L580.3,750.05Z" fill="url(#g52)" filter="url(#sb2)"/>
<path d="M580.3,743.80 L1030.3,744.80 L1030.3,746.80 L580.3,747.80Z" fill="url(#g53)" filter="url(#sb1)"/>
<path d="M580.3,712.70 L980.3,714.65 L980.3,718.55 L580.3,720.50Z" fill="url(#g54)" filter="url(#sb2)"/>
<path d="M580.3,714.95 L980.3,715.77 L980.3,717.43 L580.3,718.25Z" fill="url(#g55)" filter="url(#sb1)"/>
<path d="M580.3,689.35 L815.3,691.17 L815.3,694.83 L580.3,696.65Z" fill="url(#g56)" filter="url(#sb2)"/>
<path d="M580.3,691.60 L815.3,692.30 L815.3,693.70 L580.3,694.40Z" fill="url(#g57)" filter="url(#sb1)"/>
<path d="M580.3,669.75 L765.3,671.43 L765.3,674.77 L580.3,676.45Z" fill="url(#g58)" filter="url(#sb2)"/>
<path d="M580.3,672.00 L765.3,672.55 L765.3,673.65 L580.3,674.20Z" fill="url(#g59)" filter="url(#sb1)"/>
<path d="M580.3,657.20 L705.3,657.70 L705.3,658.70 L580.3,659.20Z" fill="url(#g60)" filter="url(#sb1)"/>
<path d="M580.3,644.60 L680.3,645.10 L680.3,646.10 L580.3,646.60Z" fill="url(#g61)" filter="url(#sb1)"/>
<path d="M580.3,634.70 L650.3,635.15 L650.3,636.05 L580.3,636.50Z" fill="url(#g62)" filter="url(#sb1)"/>
<path d="M580.3,626.50 L636.3,626.95 L636.3,627.85 L580.3,628.30Z" fill="url(#g63)" filter="url(#sb1)"/>
<path d="M580.3,619.70 L624.3,620.15 L624.3,621.05 L580.3,621.50Z" fill="url(#g64)" filter="url(#sb1)"/>
<path d="M580.3,613.70 L612.3,614.15 L612.3,615.05 L580.3,615.50Z" fill="url(#g65)" filter="url(#sb1)"/>
<path d="M580.3,608.50 L606.3,608.95 L606.3,609.85 L580.3,610.30Z" fill="url(#g66)" filter="url(#sb1)"/>
<path d="M580.3,603.70 L602.3,604.15 L602.3,605.05 L580.3,605.50Z" fill="url(#g67)" filter="url(#sb1)"/>
<path d="M580.3,599.00 L596.3,599.45 L596.3,600.35 L580.3,600.80Z" fill="url(#g68)" filter="url(#sb1)"/>
<path d="M580.3,593.90 L604.3,594.35 L604.3,595.25 L580.3,595.70Z" fill="url(#g69)" filter="url(#sb1)"/>
<path d="M580.3,582.90 L592.3,583.35 L592.3,584.25 L580.3,584.70Z" fill="url(#g70)" filter="url(#sb1)"/>
<ellipse cx="581.8" cy="777.7" rx="2.6" ry="1.8" fill="#fa5b1e" filter="url(#sb1)"/>
<ellipse cx="581.8" cy="745.8" rx="2.6" ry="1.8" fill="#f32f22" filter="url(#sb1)"/>
<ellipse cx="581.8" cy="716.6" rx="2.6" ry="1.8" fill="#ea2531" filter="url(#sb1)"/>
<ellipse cx="581.8" cy="693.0" rx="2.6" ry="1.8" fill="#cc1554" filter="url(#sb1)"/>
<ellipse cx="581.8" cy="673.1" rx="2.6" ry="1.8" fill="#bc1561" filter="url(#sb1)"/>
<ellipse cx="581.8" cy="658.2" rx="2.6" ry="1.8" fill="#a31472" filter="url(#sb1)"/>
<ellipse cx="581.8" cy="645.6" rx="2.6" ry="1.8" fill="#ea2531" filter="url(#sb1)"/>
<ellipse cx="581.8" cy="635.6" rx="2.6" ry="1.8" fill="#cc1554" filter="url(#sb1)"/>
<ellipse cx="581.8" cy="627.4" rx="2.6" ry="1.8" fill="#bc1561" filter="url(#sb1)"/>
<ellipse cx="581.8" cy="620.6" rx="2.6" ry="1.8" fill="#89147f" filter="url(#sb1)"/>
<ellipse cx="581.8" cy="614.6" rx="2.6" ry="1.8" fill="#771487" filter="url(#sb1)"/>
<ellipse cx="581.8" cy="609.4" rx="2.6" ry="1.8" fill="#621485" filter="url(#sb1)"/>
<ellipse cx="581.8" cy="604.6" rx="2.6" ry="1.8" fill="#621485" filter="url(#sb1)"/>
<ellipse cx="581.8" cy="599.9" rx="2.6" ry="1.8" fill="#5c1381" filter="url(#sb1)"/>
<ellipse cx="581.8" cy="594.8" rx="2.6" ry="1.8" fill="#771487" filter="url(#sb1)"/>
<ellipse cx="581.8" cy="589.4" rx="2.6" ry="1.8" fill="#501379" filter="url(#sb1)"/>
<ellipse cx="581.8" cy="583.8" rx="2.6" ry="1.8" fill="#4a1376" filter="url(#sb1)"/>
<rect x="1380.0" y="690" width="260" height="121" fill="url(#hazeh)" filter="url(#sb2)" opacity="0.35"/>
<rect x="1376.05" y="552" width="9.5" height="259" fill="url(#g71)" filter="url(#sb2)"/>
<rect x="1378.05" y="552" width="5.5" height="259" fill="url(#g72)" filter="url(#sb2)"/>
<rect x="1379.00" y="585" width="4.0" height="226" fill="url(#g73)" filter="url(#sb1)"/>
<path d="M1380.0,764.95 L1680.0,767.27 L1680.0,771.93 L1380.0,774.25Z" fill="url(#g74)" filter="url(#sb2)"/>
<path d="M1380.0,767.20 L1680.0,768.40 L1680.0,770.80 L1380.0,772.00Z" fill="url(#g75)" filter="url(#sb1)"/>
<path d="M1380.0,759.80 L1580.0,760.40 L1580.0,761.60 L1380.0,762.20Z" fill="url(#g76)" filter="url(#sb2)"/>
<path d="M1380.0,753.80 L1580.0,754.40 L1580.0,755.60 L1380.0,756.20Z" fill="url(#g77)" filter="url(#sb2)"/>
<path d="M1380.0,737.70 L1560.0,738.25 L1560.0,739.35 L1380.0,739.90Z" fill="url(#g78)" filter="url(#sb2)"/>
<path d="M1380.0,729.70 L1570.0,730.25 L1570.0,731.35 L1380.0,731.90Z" fill="url(#g79)" filter="url(#sb2)"/>
<path d="M1380.0,725.90 L1540.0,726.35 L1540.0,727.25 L1380.0,727.70Z" fill="url(#g80)" filter="url(#sb2)"/>
<path d="M1380.0,785.80 L1530.0,786.30 L1530.0,787.30 L1380.0,787.80Z" fill="url(#g81)" filter="url(#sb2)"/>
<path d="M1380.0,791.40 L1530.0,791.90 L1530.0,792.90 L1380.0,793.40Z" fill="url(#g82)" filter="url(#sb2)"/>
<path d="M1380.0,796.20 L1540.0,796.80 L1540.0,798.00 L1380.0,798.60Z" fill="url(#g83)" filter="url(#sb2)"/>
<path d="M1380.0,772.75 L2076.0,775.23 L2076.0,780.18 L1380.0,782.65Z" fill="url(#g84)" filter="url(#sb2)"/>
<path d="M1380.0,775.00 L2076.0,776.35 L2076.0,779.05 L1380.0,780.40Z" fill="url(#g85)" filter="url(#sb1)"/>
<path d="M1380.0,741.55 L1830.0,743.67 L1830.0,747.92 L1380.0,750.05Z" fill="url(#g86)" filter="url(#sb2)"/>
<path d="M1380.0,743.80 L1830.0,744.80 L1830.0,746.80 L1380.0,747.80Z" fill="url(#g87)" filter="url(#sb1)"/>
<path d="M1380.0,712.70 L1780.0,714.65 L1780.0,718.55 L1380.0,720.50Z" fill="url(#g88)" filter="url(#sb2)"/>
<path d="M1380.0,714.95 L1780.0,715.77 L1780.0,717.43 L1380.0,718.25Z" fill="url(#g89)" filter="url(#sb1)"/>
<path d="M1380.0,689.35 L1615.0,691.17 L1615.0,694.83 L1380.0,696.65Z" fill="url(#g90)" filter="url(#sb2)"/>
<path d="M1380.0,691.60 L1615.0,692.30 L1615.0,693.70 L1380.0,694.40Z" fill="url(#g91)" filter="url(#sb1)"/>
<path d="M1380.0,669.75 L1565.0,671.43 L1565.0,674.77 L1380.0,676.45Z" fill="url(#g92)" filter="url(#sb2)"/>
<path d="M1380.0,672.00 L1565.0,672.55 L1565.0,673.65 L1380.0,674.20Z" fill="url(#g93)" filter="url(#sb1)"/>
<path d="M1380.0,657.20 L1505.0,657.70 L1505.0,658.70 L1380.0,659.20Z" fill="url(#g94)" filter="url(#sb1)"/>
<path d="M1380.0,644.60 L1480.0,645.10 L1480.0,646.10 L1380.0,646.60Z" fill="url(#g95)" filter="url(#sb1)"/>
<path d="M1380.0,634.70 L1450.0,635.15 L1450.0,636.05 L1380.0,636.50Z" fill="url(#g96)" filter="url(#sb1)"/>
<path d="M1380.0,626.50 L1436.0,626.95 L1436.0,627.85 L1380.0,628.30Z" fill="url(#g97)" filter="url(#sb1)"/>
<path d="M1380.0,619.70 L1424.0,620.15 L1424.0,621.05 L1380.0,621.50Z" fill="url(#g98)" filter="url(#sb1)"/>
<path d="M1380.0,613.70 L1412.0,614.15 L1412.0,615.05 L1380.0,615.50Z" fill="url(#g99)" filter="url(#sb1)"/>
<path d="M1380.0,608.50 L1406.0,608.95 L1406.0,609.85 L1380.0,610.30Z" fill="url(#g100)" filter="url(#sb1)"/>
<path d="M1380.0,603.70 L1402.0,604.15 L1402.0,605.05 L1380.0,605.50Z" fill="url(#g101)" filter="url(#sb1)"/>
<path d="M1380.0,599.00 L1396.0,599.45 L1396.0,600.35 L1380.0,600.80Z" fill="url(#g102)" filter="url(#sb1)"/>
<path d="M1380.0,593.90 L1404.0,594.35 L1404.0,595.25 L1380.0,595.70Z" fill="url(#g103)" filter="url(#sb1)"/>
<path d="M1380.0,582.90 L1392.0,583.35 L1392.0,584.25 L1380.0,584.70Z" fill="url(#g104)" filter="url(#sb1)"/>
<ellipse cx="1381.5" cy="777.7" rx="2.6" ry="1.8" fill="#fa5b1e" filter="url(#sb1)"/>
<ellipse cx="1381.5" cy="745.8" rx="2.6" ry="1.8" fill="#f32f22" filter="url(#sb1)"/>
<ellipse cx="1381.5" cy="716.6" rx="2.6" ry="1.8" fill="#ea2531" filter="url(#sb1)"/>
<ellipse cx="1381.5" cy="693.0" rx="2.6" ry="1.8" fill="#cc1554" filter="url(#sb1)"/>
<ellipse cx="1381.5" cy="673.1" rx="2.6" ry="1.8" fill="#bc1561" filter="url(#sb1)"/>
<ellipse cx="1381.5" cy="658.2" rx="2.6" ry="1.8" fill="#a31472" filter="url(#sb1)"/>
<ellipse cx="1381.5" cy="645.6" rx="2.6" ry="1.8" fill="#ea2531" filter="url(#sb1)"/>
<ellipse cx="1381.5" cy="635.6" rx="2.6" ry="1.8" fill="#cc1554" filter="url(#sb1)"/>
<ellipse cx="1381.5" cy="627.4" rx="2.6" ry="1.8" fill="#bc1561" filter="url(#sb1)"/>
<ellipse cx="1381.5" cy="620.6" rx="2.6" ry="1.8" fill="#89147f" filter="url(#sb1)"/>
<ellipse cx="1381.5" cy="614.6" rx="2.6" ry="1.8" fill="#771487" filter="url(#sb1)"/>
<ellipse cx="1381.5" cy="609.4" rx="2.6" ry="1.8" fill="#621485" filter="url(#sb1)"/>
<ellipse cx="1381.5" cy="604.6" rx="2.6" ry="1.8" fill="#621485" filter="url(#sb1)"/>
<ellipse cx="1381.5" cy="599.9" rx="2.6" ry="1.8" fill="#5c1381" filter="url(#sb1)"/>
<ellipse cx="1381.5" cy="594.8" rx="2.6" ry="1.8" fill="#771487" filter="url(#sb1)"/>
<ellipse cx="1381.5" cy="589.4" rx="2.6" ry="1.8" fill="#501379" filter="url(#sb1)"/>
<ellipse cx="1381.5" cy="583.8" rx="2.6" ry="1.8" fill="#4a1376" filter="url(#sb1)"/>
<rect x="1290.70" y="700" width="1.6" height="86" fill="url(#g105)" filter="url(#sb2)"/>
<rect x="1332.70" y="762" width="1.6" height="20" fill="url(#g106)" filter="url(#sb2)"/>
<path d="M1292,776.90 L1336,776.90 L1336,778.30 L1292,778.30Z" fill="url(#g107)" filter="url(#sb2)"/>
<rect x="319.10" y="690" width="1.8" height="115" fill="url(#g108)" filter="url(#sb2)"/>
<ellipse cx="321" cy="776" rx="3.5" ry="3.5" fill="#bb1561" filter="url(#sb2)"/>
<ellipse cx="379.0" cy="745.0" rx="15.0" ry="55.0" fill="#1d0a30" opacity="0.90" filter="url(#sb6)"/>
<ellipse cx="423.0" cy="755.0" rx="12.0" ry="45.0" fill="#1b092e" opacity="0.90" filter="url(#sb6)"/>
<rect x="402.50" y="568" width="4.0" height="237" fill="url(#g109)" filter="url(#sb2)"/>
<rect x="445.00" y="572" width="4.0" height="233" fill="url(#g110)" filter="url(#sb2)"/>
<rect x="387.50" y="620" width="3.0" height="140" fill="url(#g111)" filter="url(#sb2)"/>
<rect x="365.75" y="660" width="2.5" height="120" fill="url(#g112)" filter="url(#sb2)"/>
<path d="M366.0,776.0 L377.0,781.5" stroke="#cd1553" stroke-width="3.4" stroke-linecap="round" fill="none" filter="url(#sb2)"/>
<path d="M382.0,781.5 L394.0,775.0" stroke="#cd1553" stroke-width="3.4" stroke-linecap="round" fill="none" filter="url(#sb2)"/>
<path d="M366.0,763.0 L377.0,768.5" stroke="#aa146e" stroke-width="3.4" stroke-linecap="round" fill="none" filter="url(#sb2)"/>
<path d="M382.0,768.5 L394.0,762.0" stroke="#aa146e" stroke-width="3.4" stroke-linecap="round" fill="none" filter="url(#sb2)"/>
<path d="M366.0,749.5 L377.0,755.0" stroke="#6b148a" stroke-width="3.4" stroke-linecap="round" fill="none" filter="url(#sb2)"/>
<path d="M382.0,755.0 L394.0,748.5" stroke="#6b148a" stroke-width="3.4" stroke-linecap="round" fill="none" filter="url(#sb2)"/>
<path d="M366.0,736.0 L377.0,741.5" stroke="#481274" stroke-width="3.4" stroke-linecap="round" fill="none" filter="url(#sb2)"/>
<path d="M382.0,741.5 L394.0,735.0" stroke="#51137a" stroke-width="3.4" stroke-linecap="round" fill="none" filter="url(#sb2)"/>
<path d="M366.0,723.0 L377.0,728.5" stroke="#3d126c" stroke-width="3.4" stroke-linecap="round" fill="none" filter="url(#sb2)"/>
<path d="M382.0,728.5 L394.0,722.0" stroke="#441272" stroke-width="3.4" stroke-linecap="round" fill="none" filter="url(#sb2)"/>
<path d="M366.0,710.0 L377.0,715.5" stroke="#391164" stroke-width="3.4" stroke-linecap="round" fill="none" filter="url(#sb2)"/>
<path d="M382.0,715.5 L394.0,709.0" stroke="#3e126e" stroke-width="3.4" stroke-linecap="round" fill="none" filter="url(#sb2)"/>
<path d="M366.0,697.0 L377.0,702.5" stroke="#35105d" stroke-width="3.4" stroke-linecap="round" fill="none" filter="url(#sb2)"/>
<path d="M382.0,702.5 L394.0,696.0" stroke="#3a1166" stroke-width="3.4" stroke-linecap="round" fill="none" filter="url(#sb2)"/>
<path d="M366.0,684.0 L377.0,689.5" stroke="#2f0e52" stroke-width="3.4" stroke-linecap="round" fill="none" filter="url(#sb2)"/>
<path d="M382.0,689.5 L394.0,683.0" stroke="#330f5a" stroke-width="3.4" stroke-linecap="round" fill="none" filter="url(#sb2)"/>
<path d="M366.0,671.0 L377.0,676.5" stroke="#290d47" stroke-width="3.4" stroke-linecap="round" fill="none" filter="url(#sb2)"/>
<path d="M382.0,676.5 L394.0,670.0" stroke="#2d0e4e" stroke-width="3.4" stroke-linecap="round" fill="none" filter="url(#sb2)"/>
<path d="M366.0,658.0 L377.0,663.5" stroke="#250c40" stroke-width="3.4" stroke-linecap="round" fill="none" filter="url(#sb2)"/>
<path d="M382.0,663.5 L394.0,657.0" stroke="#290d46" stroke-width="3.4" stroke-linecap="round" fill="none" filter="url(#sb2)"/>
<path d="M366.0,645.0 L377.0,650.5" stroke="#210b38" stroke-width="3.4" stroke-linecap="round" fill="none" filter="url(#sb2)"/>
<path d="M382.0,650.5 L394.0,644.0" stroke="#240c3e" stroke-width="3.4" stroke-linecap="round" fill="none" filter="url(#sb2)"/>
<path d="M411.0,779.5 L421.0,784.0" stroke="#761488" stroke-width="3.4" stroke-linecap="round" fill="none" filter="url(#sb2)"/>
<path d="M425.0,784.0 L436.0,778.0" stroke="#8e147c" stroke-width="3.4" stroke-linecap="round" fill="none" filter="url(#sb2)"/>
<path d="M411.0,766.5 L421.0,771.0" stroke="#5d1381" stroke-width="3.4" stroke-linecap="round" fill="none" filter="url(#sb2)"/>
<path d="M425.0,771.0 L436.0,765.0" stroke="#6b148a" stroke-width="3.4" stroke-linecap="round" fill="none" filter="url(#sb2)"/>
<path d="M411.0,753.5 L421.0,758.0" stroke="#4b1376" stroke-width="3.4" stroke-linecap="round" fill="none" filter="url(#sb2)"/>
<path d="M425.0,758.0 L436.0,752.0" stroke="#58137e" stroke-width="3.4" stroke-linecap="round" fill="none" filter="url(#sb2)"/>
<path d="M411.0,740.5 L421.0,745.0" stroke="#3d126d" stroke-width="3.4" stroke-linecap="round" fill="none" filter="url(#sb2)"/>
<path d="M425.0,745.0 L436.0,739.0" stroke="#481274" stroke-width="3.4" stroke-linecap="round" fill="none" filter="url(#sb2)"/>
<path d="M411.0,727.5 L421.0,732.0" stroke="#381062" stroke-width="3.4" stroke-linecap="round" fill="none" filter="url(#sb2)"/>
<path d="M425.0,732.0 L436.0,726.0" stroke="#3e126e" stroke-width="3.4" stroke-linecap="round" fill="none" filter="url(#sb2)"/>
<path d="M411.0,714.5 L421.0,719.0" stroke="#340f5b" stroke-width="3.4" stroke-linecap="round" fill="none" filter="url(#sb2)"/>
<path d="M425.0,719.0 L436.0,713.0" stroke="#3a1166" stroke-width="3.4" stroke-linecap="round" fill="none" filter="url(#sb2)"/>
<path d="M411.0,701.5 L421.0,706.0" stroke="#300e54" stroke-width="3.4" stroke-linecap="round" fill="none" filter="url(#sb2)"/>
<path d="M425.0,706.0 L436.0,700.0" stroke="#35105e" stroke-width="3.4" stroke-linecap="round" fill="none" filter="url(#sb2)"/>
<path d="M411.0,688.5 L421.0,693.0" stroke="#2c0e4c" stroke-width="3.4" stroke-linecap="round" fill="none" filter="url(#sb2)"/>
<path d="M425.0,693.0 L436.0,687.0" stroke="#310f56" stroke-width="3.4" stroke-linecap="round" fill="none" filter="url(#sb2)"/>
<ellipse cx="452.0" cy="650.0" rx="7.0" ry="70.0" fill="#1e0a32" opacity="0.90" filter="url(#sb6)"/>
<ellipse cx="449.0" cy="590.0" rx="3.0" ry="5.0" fill="#2d0e4e" opacity="0.85" filter="url(#sb2)"/>
<ellipse cx="451.0" cy="610.0" rx="4.0" ry="5.0" fill="#310f56" opacity="0.85" filter="url(#sb2)"/>
<ellipse cx="452.0" cy="628.0" rx="4.0" ry="5.0" fill="#35105e" opacity="0.85" filter="url(#sb2)"/>
<ellipse cx="454.0" cy="645.0" rx="5.0" ry="5.0" fill="#441272" opacity="0.85" filter="url(#sb2)"/>
<ellipse cx="452.0" cy="672.0" rx="5.0" ry="5.0" fill="#35105e" opacity="0.85" filter="url(#sb2)"/>
<ellipse cx="455.0" cy="698.0" rx="4.0" ry="5.0" fill="#2d0e4e" opacity="0.85" filter="url(#sb2)"/>
<ellipse cx="450.0" cy="722.0" rx="3.0" ry="5.0" fill="#290d46" opacity="0.85" filter="url(#sb2)"/>
<path d="M362,794.5 Q370,799 378,796 T395,795" stroke="#e72136" stroke-width="6" fill="none" stroke-linecap="round" filter="url(#sb2)"/>
<path d="M365,795.5 Q371,798.5 378,796.5 T392,795.5" stroke="#ff8c1e" stroke-width="2.4" fill="none" stroke-linecap="round" filter="url(#sb1)"/>
<path d="M409,796 Q420,800 425,798.5 T437,795.5" stroke="#e31c3e" stroke-width="6" fill="none" stroke-linecap="round" filter="url(#sb2)"/>
<path d="M412,796.8 Q420,799.2 425,798.2 T434,796.2" stroke="#fb681e" stroke-width="2.2" fill="none" stroke-linecap="round" filter="url(#sb1)"/>
<ellipse cx="450.0" cy="655.0" rx="6.0" ry="5.0" fill="#7c1485" opacity="1.00" filter="url(#sb2)"/>
<ellipse cx="449.0" cy="654.0" rx="2.5" ry="2.0" fill="#a11473" opacity="1.00" filter="url(#sb1)"/>
<path d="M455,776.30 L500,776.30 L500,777.70 L455,777.70Z" fill="url(#g113)" filter="url(#sb1)"/>
<rect x="489.30" y="765" width="1.4" height="35" fill="url(#g114)" filter="url(#sb1)"/>
</g></svg>
<rect x="6" y="811" width="2069" height="1" fill="#a29ca2"/>
<rect x="6" y="812" width="2069" height="3" fill="#0b0b0b"/>
<rect x="2075" y="532" width="92" height="278" fill="#232323"/>
<rect x="2075" y="810" width="93" height="1.2" fill="#070707"/>
<rect x="2075" y="811.2" width="92" height="4" fill="#232323"/>
<text x="2086" y="546" font-size="13" fill="#a0a0a0">Hz</text>
<rect x="2076" y="569.9" width="5.5" height="1.0" fill="#a8a8a8" shape-rendering="geometricPrecision"/>
<text x="2087" y="575.4" font-size="13.5" fill="#b4b4b4">10k</text>
<rect x="2076" y="580.9" width="3.5" height="1.0" fill="#a8a8a8" shape-rendering="geometricPrecision"/>
<rect x="2076" y="595.9" width="3.5" height="1.0" fill="#a8a8a8" shape-rendering="geometricPrecision"/>
<text x="2087" y="601.4" font-size="13.5" fill="#626262">6k</text>
<rect x="2076" y="619.7" width="3.5" height="1.0" fill="#a8a8a8" shape-rendering="geometricPrecision"/>
<text x="2087" y="625.2" font-size="13.5" fill="#626262">4k</text>
<rect x="2076" y="672.1" width="3.5" height="1.0" fill="#a8a8a8" shape-rendering="geometricPrecision"/>
<text x="2087" y="677.6" font-size="13.5" fill="#626262">2k</text>
<rect x="2076" y="729.8" width="5.5" height="1.0" fill="#a8a8a8" shape-rendering="geometricPrecision"/>
<text x="2087" y="735.3" font-size="13.5" fill="#b4b4b4">1k</text>
<rect x="2076" y="746.0" width="3.5" height="1.0" fill="#a8a8a8" shape-rendering="geometricPrecision"/>
<text x="2087" y="751.5" font-size="13.5" fill="#626262">800</text>
<rect x="2076" y="760.8" width="3.5" height="1.0" fill="#a8a8a8" shape-rendering="geometricPrecision"/>
<text x="2087" y="766.3" font-size="13.5" fill="#626262">600</text>
<rect x="2076" y="778.3" width="3.5" height="1.0" fill="#a8a8a8" shape-rendering="geometricPrecision"/>
<text x="2087" y="783.8" font-size="13.5" fill="#626262">400</text>
<rect x="2076" y="794.9" width="3.5" height="1.0" fill="#a8a8a8" shape-rendering="geometricPrecision"/>
<text x="2087" y="800.4" font-size="13.5" fill="#626262">200</text>
<rect x="2076" y="802.8" width="5" height="2.4" fill="#b0b0b0" shape-rendering="geometricPrecision"/>
</svg>
</body></html>
